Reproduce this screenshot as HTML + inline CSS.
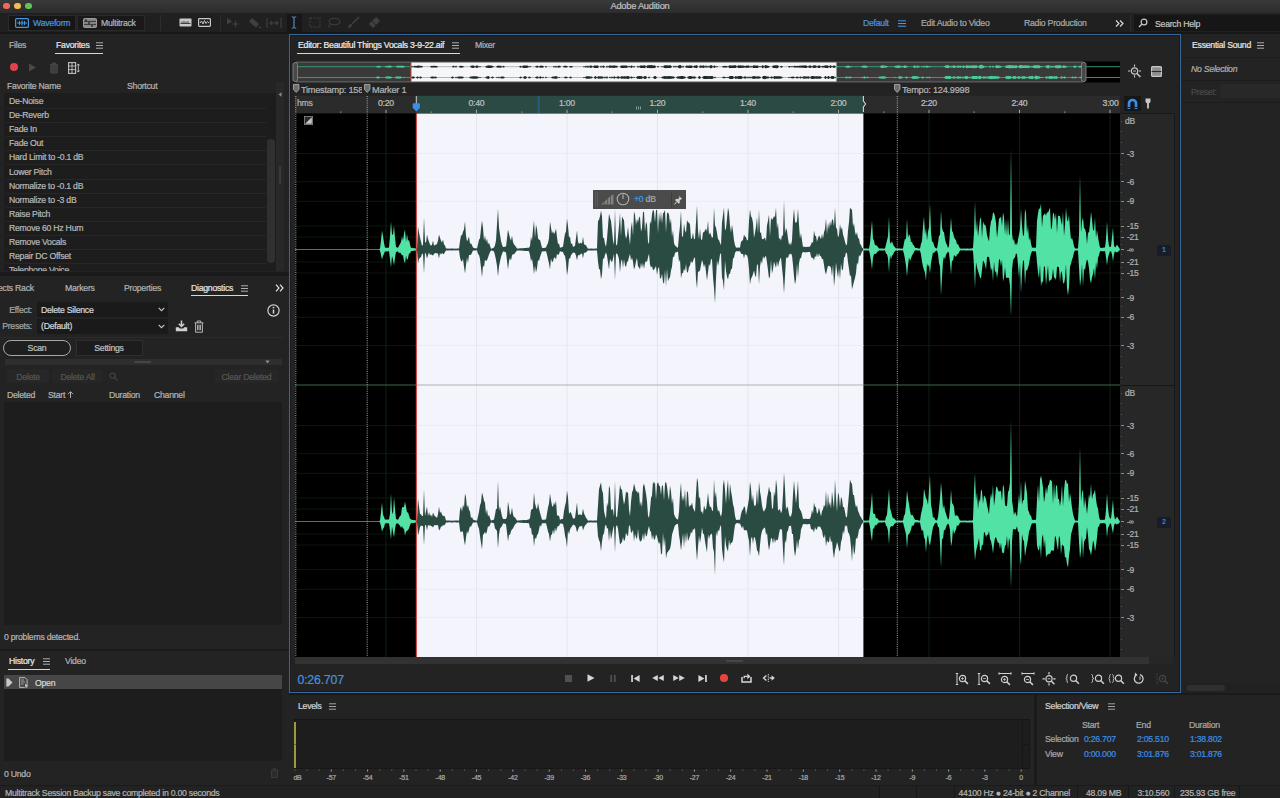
<!DOCTYPE html>
<html><head><meta charset="utf-8"><title>Adobe Audition</title>
<style>
html,body{margin:0;padding:0;background:#1a1a1a;}
body{width:1280px;height:798px;position:relative;overflow:hidden;font-family:"Liberation Sans",sans-serif;}
#app{position:absolute;left:0;top:0;width:1280px;height:798px;overflow:hidden;}
#app div{position:absolute;}
#app svg{position:absolute;overflow:visible;}
.t{letter-spacing:-0.25px;-webkit-text-stroke:0.22px currentColor;}
</style></head><body><div id="app">
<div style="left:0px;top:0px;width:1280px;height:798px;background:#1a1a1a;"></div>
<div style="left:0px;top:0px;width:1280px;height:12.5px;background:linear-gradient(#393939,#2c2c2c);"></div>
<div class="t" style="top:0.3px;line-height:12px;font-size:9.3px;color:#c0c0c0;white-space:nowrap;left:540px;width:200px;text-align:center;">Adobe Audition</div>
<div style="left:3.3px;top:3.0999999999999996px;width:6.4px;height:6.4px;border-radius:50%;background:#ee6a5f"></div>
<div style="left:14.3px;top:3.0999999999999996px;width:6.4px;height:6.4px;border-radius:50%;background:#f5bd4f"></div>
<div style="left:25.3px;top:3.0999999999999996px;width:6.4px;height:6.4px;border-radius:50%;background:#61c454"></div>
<div style="left:0px;top:12.5px;width:1280px;height:19.5px;background:#202020;"></div>
<div style="left:0px;top:32px;width:1280px;height:1.5px;background:#171717;"></div>
<div style="left:0px;top:33.5px;width:289px;height:238.5px;background:#232323;"></div>
<div style="left:0px;top:276px;width:289px;height:372.5px;background:#232323;"></div>
<div style="left:0px;top:651px;width:289px;height:134px;background:#232323;"></div>
<div style="left:288.8px;top:34.4px;width:892.4px;height:658.6px;background:#232323;box-sizing:border-box;border:1.8px solid #3b6797;box-shadow:inset 0 0 0 1px #171b21;"></div>
<div style="left:1181px;top:33.5px;width:99px;height:659px;background:#232323;"></div>
<div style="left:289px;top:694.5px;width:745px;height:90.5px;background:#232323;"></div>
<div style="left:1036.5px;top:694.5px;width:243.5px;height:90.5px;background:#232323;"></div>
<div style="left:0px;top:785.5px;width:1280px;height:12.5px;background:#222222;"></div>
<div style="left:8px;top:15px;width:68px;height:16px;background:#161616;box-sizing:border-box;border:1px solid #2b2b2b;"></div>
<div style="left:77px;top:15px;width:68px;height:16px;background:#191919;box-sizing:border-box;border:1px solid #2b2b2b;"></div>
<svg style="left:15px;top:18px" width="14" height="10" viewBox="0 0 14 10"><rect x="0.6" y="0.6" width="12.8" height="8.8" rx="1" fill="none" stroke="#4a94e0" stroke-width="1.2"/><path d="M2 5h10M4.5 3v4M7 2.6v4.8M9.5 3v4" stroke="#4a94e0" stroke-width="1.1" fill="none"/></svg>
<div class="t" style="top:17.0px;line-height:12px;font-size:8.7px;color:#4a94e0;white-space:nowrap;left:33px;">Waveform</div>
<svg style="left:83px;top:18px" width="14" height="10" viewBox="0 0 14 10"><rect x="0.5" y="0.5" width="13" height="9" rx="1" fill="#8a8a8a" stroke="#9a9a9a" stroke-width="1"/><path d="M1 3.4h12M1 6.4h12" stroke="#2a2a2a" stroke-width="0.9"/><path d="M3 1.2v2M6 4v2M9 7v2" stroke="#2a2a2a" stroke-width="1.4"/></svg>
<div class="t" style="top:17.0px;line-height:12px;font-size:8.7px;color:#b4b4b4;white-space:nowrap;left:101px;">Multitrack</div>
<div style="left:160px;top:15px;width:1px;height:16px;background:#2d2d2d;"></div>
<svg style="left:179px;top:18px" width="13" height="9" viewBox="0 0 13 9"><rect x="0.5" y="0.5" width="12" height="8" rx="0.8" fill="#c8c8c8"/><path d="M1.5 5.5h10M3 3.5v2M5 3v2.5M7 3.5v2M9 3v2.5" stroke="#333" stroke-width="0.9"/></svg>
<svg style="left:198px;top:18px" width="13" height="9" viewBox="0 0 13 9"><rect x="0.6" y="0.6" width="11.8" height="7.8" rx="0.8" fill="none" stroke="#c8c8c8" stroke-width="1.2"/><path d="M2 5l1.5-2 1.5 3 1.5-3.5 1.5 3 1.5-2 1.5 1.5" stroke="#c8c8c8" stroke-width="1" fill="none"/></svg>
<svg style="left:226px;top:17px" width="14" height="12" viewBox="0 0 14 12"><path d="M1 1l5 3.5-5 3z" fill="#404040"/><path d="M9.5 4v6M6.5 7h6" stroke="#404040" stroke-width="1.2"/></svg>
<svg style="left:248px;top:17px" width="14" height="12" viewBox="0 0 14 12"><path d="M4 1l7 6-3 3.5-7-6z" fill="#404040"/><path d="M11 9.5l2 1.5" stroke="#404040" stroke-width="1.2"/></svg>
<svg style="left:266px;top:17px" width="16" height="12" viewBox="0 0 16 12"><path d="M1 1v10M15 1v10M4 6h8M6 4l-2 2 2 2M10 4l2 2-2 2" stroke="#404040" stroke-width="1.1" fill="none"/></svg>
<div style="left:286.5px;top:14px;width:15.5px;height:18px;background:#171717;"></div>
<svg style="left:289.5px;top:16px" width="8" height="13" viewBox="0 0 8 13"><path d="M1.8 0.8c1.2 0 2.2 0.4 2.2 1.2c0-0.8 1-1.2 2.2-1.2M1.8 12.2c1.2 0 2.2-0.4 2.2-1.2c0 0.8 1 1.2 2.2 1.2M4 2v9" stroke="#62a2e8" stroke-width="1" fill="none"/></svg>
<div style="left:220px;top:15px;width:1px;height:16px;background:#2c2c2c;"></div>
<svg style="left:309px;top:17px" width="12" height="11" viewBox="0 0 12 11"><rect x="1" y="1" width="10" height="9" fill="none" stroke="#404040" stroke-width="1.1" stroke-dasharray="2 1.3"/></svg>
<svg style="left:327px;top:17px" width="14" height="11" viewBox="0 0 14 11"><ellipse cx="7.5" cy="4.5" rx="5.5" ry="3.3" fill="none" stroke="#404040" stroke-width="1.1"/><path d="M3 7.5l-1.5 3" stroke="#404040" stroke-width="1.1"/></svg>
<svg style="left:347px;top:16px" width="13" height="13" viewBox="0 0 13 13"><path d="M12 1L5 8" stroke="#404040" stroke-width="1.6"/><path d="M1 12c0-3 2-4 4-4 0 2-1 4-4 4z" fill="#404040"/></svg>
<svg style="left:367px;top:16px" width="14" height="13" viewBox="0 0 14 13"><path d="M9 1l4 4-7 7-4-4z" fill="#404040"/><path d="M5 5l4 4" stroke="#1f1f1f" stroke-width="0.8"/></svg>
<div class="t" style="top:17.0px;line-height:12px;font-size:8.7px;color:#4a94e0;white-space:nowrap;left:863px;">Default</div>
<svg style="left:898px;top:19.5px" width="8" height="7" viewBox="0 0 8 7"><path d="M0 0.8h8M0 3.5h8M0 6.2h8" stroke="#4a94e0" stroke-width="1"/></svg>
<div class="t" style="top:17.0px;line-height:12px;font-size:8.7px;color:#a8a8a8;white-space:nowrap;left:921px;">Edit Audio to Video</div>
<div class="t" style="top:17.0px;line-height:12px;font-size:8.7px;color:#a8a8a8;white-space:nowrap;left:1024px;">Radio Production</div>
<svg style="left:1115px;top:19.5px" width="9" height="7" viewBox="0 0 9 7"><path d="M1 0.5l3 3-3 3M5 0.5l3 3-3 3" stroke="#d8d8d8" stroke-width="1.2" fill="none"/></svg>
<div style="left:1130px;top:14px;width:1px;height:18px;background:#2d2d2d;"></div>
<div style="left:1134px;top:15px;width:146px;height:16px;background:#161616;"></div>
<svg style="left:1138px;top:18px" width="10" height="10" viewBox="0 0 10 10"><circle cx="6" cy="4" r="2.9" fill="none" stroke="#c8c8c8" stroke-width="1.2"/><path d="M3.8 6.2L1 9" stroke="#c8c8c8" stroke-width="1.4"/></svg>
<div class="t" style="top:18.0px;line-height:12px;font-size:8.7px;color:#c4c4c4;white-space:nowrap;left:1155px;">Search Help</div>
<div class="t" style="top:39.0px;line-height:12px;font-size:8.7px;color:#b2b2b2;white-space:nowrap;left:9px;">Files</div>
<div class="t" style="top:39.0px;line-height:12px;font-size:8.7px;color:#e4e4e4;white-space:nowrap;left:56px;">Favorites</div>
<svg style="left:96px;top:41.8px" width="7" height="7" viewBox="0 0 7 7"><path d="M0 0.8h7M0 3.5h7M0 6.2h7" stroke="#c0c0c0" stroke-width="0.9"/></svg>
<div style="left:55px;top:52.7px;width:48px;height:1.4px;background:#d8d8d8;"></div>
<div style="left:9.5px;top:63px;width:8px;height:8px;border-radius:50%;background:#e0434a"></div>
<svg style="left:28px;top:63px" width="9" height="9" viewBox="0 0 9 9"><path d="M1 0.5l7 4-7 4z" fill="#4a4a4a"/></svg>
<svg style="left:49px;top:61.5px" width="10" height="12" viewBox="0 0 10 12"><path d="M1 2.5h8M3.5 2.5v-1.5h3v1.5M1.8 2.5v8.5h6.4v-8.5" fill="#3e3e3e" stroke="#464646" stroke-width="1"/></svg>
<svg style="left:68px;top:61.5px" width="12" height="12" viewBox="0 0 12 12"><rect x="0.6" y="0.6" width="7" height="10.8" fill="none" stroke="#c4c4c4" stroke-width="1.1"/><path d="M0.6 4h7M0.6 7.6h7M4 0.6v10.8" stroke="#c4c4c4" stroke-width="0.9"/><path d="M10.3 2v8M9 3.5l1.3-1.6 1.3 1.6M9 8.5l1.3 1.6 1.3-1.6" stroke="#c4c4c4" stroke-width="0.9" fill="none"/></svg>
<div class="t" style="top:80.0px;line-height:12px;font-size:8.7px;color:#b4b4b4;white-space:nowrap;left:7px;">Favorite Name</div>
<div class="t" style="top:80.0px;line-height:12px;font-size:8.7px;color:#b4b4b4;white-space:nowrap;left:127px;">Shortcut</div>
<div style="left:4px;top:93px;width:272px;height:178px;background:#1d1d1d;"></div>
<div style="left:0;top:93px;width:286px;height:178px;overflow:hidden;">
<div style="left:6px;top:15.0px;width:260px;height:1px;background:#272727"></div>
<div class="t" style="left:9px;top:2.0px;line-height:12px;font-size:8.7px;color:#b8b8b8;white-space:nowrap">De-Noise</div>
<div style="left:6px;top:29.1px;width:260px;height:1px;background:#272727"></div>
<div class="t" style="left:9px;top:16.1px;line-height:12px;font-size:8.7px;color:#b8b8b8;white-space:nowrap">De-Reverb</div>
<div style="left:6px;top:43.2px;width:260px;height:1px;background:#272727"></div>
<div class="t" style="left:9px;top:30.2px;line-height:12px;font-size:8.7px;color:#b8b8b8;white-space:nowrap">Fade In</div>
<div style="left:6px;top:57.3px;width:260px;height:1px;background:#272727"></div>
<div class="t" style="left:9px;top:44.3px;line-height:12px;font-size:8.7px;color:#b8b8b8;white-space:nowrap">Fade Out</div>
<div style="left:6px;top:71.4px;width:260px;height:1px;background:#272727"></div>
<div class="t" style="left:9px;top:58.4px;line-height:12px;font-size:8.7px;color:#b8b8b8;white-space:nowrap">Hard Limit to -0.1 dB</div>
<div style="left:6px;top:85.5px;width:260px;height:1px;background:#272727"></div>
<div class="t" style="left:9px;top:72.5px;line-height:12px;font-size:8.7px;color:#b8b8b8;white-space:nowrap">Lower Pitch</div>
<div style="left:6px;top:99.6px;width:260px;height:1px;background:#272727"></div>
<div class="t" style="left:9px;top:86.6px;line-height:12px;font-size:8.7px;color:#b8b8b8;white-space:nowrap">Normalize to -0.1 dB</div>
<div style="left:6px;top:113.7px;width:260px;height:1px;background:#272727"></div>
<div class="t" style="left:9px;top:100.7px;line-height:12px;font-size:8.7px;color:#b8b8b8;white-space:nowrap">Normalize to -3 dB</div>
<div style="left:6px;top:127.8px;width:260px;height:1px;background:#272727"></div>
<div class="t" style="left:9px;top:114.8px;line-height:12px;font-size:8.7px;color:#b8b8b8;white-space:nowrap">Raise Pitch</div>
<div style="left:6px;top:141.9px;width:260px;height:1px;background:#272727"></div>
<div class="t" style="left:9px;top:128.9px;line-height:12px;font-size:8.7px;color:#b8b8b8;white-space:nowrap">Remove 60 Hz Hum</div>
<div style="left:6px;top:156.0px;width:260px;height:1px;background:#272727"></div>
<div class="t" style="left:9px;top:143.0px;line-height:12px;font-size:8.7px;color:#b8b8b8;white-space:nowrap">Remove Vocals</div>
<div style="left:6px;top:170.1px;width:260px;height:1px;background:#272727"></div>
<div class="t" style="left:9px;top:157.1px;line-height:12px;font-size:8.7px;color:#b8b8b8;white-space:nowrap">Repair DC Offset</div>
<div style="left:6px;top:184.2px;width:260px;height:1px;background:#272727"></div>
<div class="t" style="left:9px;top:171.2px;line-height:12px;font-size:8.7px;color:#b8b8b8;white-space:nowrap">Telephone Voice</div>
</div>
<div style="left:267px;top:139px;width:7.5px;height:124px;background:#303030;border-radius:3.7px;"></div>
<div style="left:276px;top:82px;width:8px;height:189px;background:#282828;"></div>
<svg style="left:277.5px;top:91.5px" width="4" height="5" viewBox="0 0 4 5"><path d="M3.5 0.3v4.4L0.5 2.5z" fill="#8c8c8c"/></svg>
<div style="left:278.5px;top:166px;width:2.5px;height:18px;background:#3a3a3a;"></div>
<div class="t" style="top:282.0px;line-height:12px;font-size:8.7px;color:#b2b2b2;white-space:nowrap;left:-2px;">ects Rack</div>
<div class="t" style="top:282.0px;line-height:12px;font-size:8.7px;color:#b2b2b2;white-space:nowrap;left:65px;">Markers</div>
<div class="t" style="top:282.0px;line-height:12px;font-size:8.7px;color:#b2b2b2;white-space:nowrap;left:124px;">Properties</div>
<div class="t" style="top:282.0px;line-height:12px;font-size:8.7px;color:#e4e4e4;white-space:nowrap;left:191px;">Diagnostics</div>
<svg style="left:240.5px;top:284.5px" width="7" height="7" viewBox="0 0 7 7"><path d="M0 0.8h7M0 3.5h7M0 6.2h7" stroke="#c0c0c0" stroke-width="0.9"/></svg>
<div style="left:191px;top:295px;width:57px;height:1.3px;background:#d8d8d8;"></div>
<svg style="left:275px;top:284px" width="9" height="8" viewBox="0 0 9 8"><path d="M1 0.7l3 3.3-3 3.3M5 0.7l3 3.3-3 3.3" stroke="#e0e0e0" stroke-width="1.2" fill="none"/></svg>
<div class="t" style="top:303.5px;line-height:12px;font-size:8.7px;color:#a6a6a6;white-space:nowrap;right:1248px;">Effect:</div>
<div style="left:37px;top:302px;width:131px;height:15px;background:#1a1a1a;"></div>
<div class="t" style="top:303.5px;line-height:12px;font-size:8.7px;color:#d8d8d8;white-space:nowrap;left:41px;">Delete Silence</div>
<svg style="left:158px;top:307px" width="7" height="5" viewBox="0 0 7 5"><path d="M0.7 0.8l2.8 2.8 2.8-2.8" stroke="#c8c8c8" stroke-width="1.1" fill="none"/></svg>
<div class="t" style="top:320.0px;line-height:12px;font-size:8.7px;color:#a6a6a6;white-space:nowrap;right:1248px;">Presets:</div>
<div style="left:37px;top:319px;width:131px;height:15px;background:#1a1a1a;"></div>
<div class="t" style="top:320.0px;line-height:12px;font-size:8.7px;color:#d8d8d8;white-space:nowrap;left:41px;">(Default)</div>
<svg style="left:158px;top:323.5px" width="7" height="5" viewBox="0 0 7 5"><path d="M0.7 0.8l2.8 2.8 2.8-2.8" stroke="#c8c8c8" stroke-width="1.1" fill="none"/></svg>
<svg style="left:266.5px;top:303.5px" width="13" height="13" viewBox="0 0 13 13"><circle cx="6.5" cy="6.5" r="5.6" fill="none" stroke="#d0d0d0" stroke-width="1.2"/><path d="M6.5 5.6v4" stroke="#d0d0d0" stroke-width="1.5"/><circle cx="6.5" cy="3.6" r="0.9" fill="#d0d0d0"/></svg>
<svg style="left:175px;top:320px" width="13" height="12" viewBox="0 0 13 12"><path d="M6.5 0.5v5.5M3.8 3.8l2.7 2.7 2.7-2.7" stroke="#d0d0d0" stroke-width="1.5" fill="none"/><path d="M0.8 7.2h3l1 1.3h3.4l1-1.3h3v4h-11.4z" fill="#d0d0d0"/></svg>
<svg style="left:194px;top:319.5px" width="10" height="13" viewBox="0 0 10 13"><path d="M0.6 2.8h8.8M3.3 2.8v-1.8h3.4v1.8M1.6 2.8v9.4h6.8v-9.4M3.6 4.8v5.4M5 4.8v5.4M6.4 4.8v5.4" fill="none" stroke="#b8b8b8" stroke-width="1"/></svg>
<div style="left:3px;top:340px;width:68px;height:15.5px;background:#1f1f1f;box-sizing:border-box;border:1px solid #a8a8a8;border-radius:8px;"></div>
<div class="t" style="top:341.5px;line-height:12px;font-size:8.7px;color:#c0c0c0;white-space:nowrap;left:-63px;width:200px;text-align:center;">Scan</div>
<div style="left:76px;top:340px;width:67px;height:15.5px;background:#1c1c1c;box-sizing:border-box;border:1px solid #2e2e2e;"></div>
<div class="t" style="top:341.5px;line-height:12px;font-size:8.7px;color:#c0c0c0;white-space:nowrap;left:9px;width:200px;text-align:center;">Settings</div>
<div style="left:0px;top:336.5px;width:284px;height:1px;background:#2a2a2a;"></div>
<div style="left:5px;top:358.5px;width:277px;height:6.5px;background:#2e2e2e;"></div>
<div style="left:134px;top:361px;width:17px;height:1.5px;background:#454545;"></div>
<svg style="left:265px;top:360px" width="5" height="4" viewBox="0 0 5 4"><path d="M0.3 0.5h4.4L2.5 3.5z" fill="#8c8c8c"/></svg>
<div style="left:7px;top:369px;width:42px;height:14px;background:#262626;border-radius:2px;"></div>
<div class="t" style="top:370.5px;line-height:12px;font-size:8.7px;color:#565656;white-space:nowrap;left:-72px;width:200px;text-align:center;">Delete</div>
<div style="left:52px;top:369px;width:51px;height:14px;background:#262626;border-radius:2px;"></div>
<div class="t" style="top:370.5px;line-height:12px;font-size:8.7px;color:#565656;white-space:nowrap;left:-22.5px;width:200px;text-align:center;">Delete All</div>
<svg style="left:109px;top:372px" width="9" height="9" viewBox="0 0 9 9"><circle cx="3.6" cy="3.6" r="2.6" fill="none" stroke="#444" stroke-width="1.1"/><path d="M5.5 5.5l3 3" stroke="#444" stroke-width="1.2"/></svg>
<div style="left:215px;top:369px;width:64px;height:14px;background:#262626;border-radius:2px;"></div>
<div class="t" style="top:370.5px;line-height:12px;font-size:8.7px;color:#565656;white-space:nowrap;left:146.5px;width:200px;text-align:center;">Clear Deleted</div>
<div class="t" style="top:388.5px;line-height:12px;font-size:8.7px;color:#b4b4b4;white-space:nowrap;left:7px;">Deleted</div>
<div class="t" style="top:388.5px;line-height:12px;font-size:8.7px;color:#b4b4b4;white-space:nowrap;left:48px;">Start</div>
<svg style="left:67px;top:390.5px" width="7" height="7" viewBox="0 0 7 7"><path d="M3.5 0.8v6M1 3.2l2.5-2.5 2.5 2.5" stroke="#b4b4b4" stroke-width="1" fill="none"/></svg>
<div class="t" style="top:388.5px;line-height:12px;font-size:8.7px;color:#b4b4b4;white-space:nowrap;left:109px;">Duration</div>
<div class="t" style="top:388.5px;line-height:12px;font-size:8.7px;color:#b4b4b4;white-space:nowrap;left:154px;">Channel</div>
<div style="left:4px;top:402px;width:278px;height:223px;background:#1d1d1d;"></div>
<div class="t" style="top:631.0px;line-height:12px;font-size:8.7px;color:#b4b4b4;white-space:nowrap;left:4px;">0 problems detected.</div>
<div class="t" style="top:655.0px;line-height:12px;font-size:8.7px;color:#e8e8e8;white-space:nowrap;left:9px;">History</div>
<svg style="left:43px;top:657.7px" width="7" height="7" viewBox="0 0 7 7"><path d="M0 0.8h7M0 3.5h7M0 6.2h7" stroke="#c0c0c0" stroke-width="0.9"/></svg>
<div style="left:8px;top:669px;width:42px;height:1.3px;background:#d8d8d8;"></div>
<div class="t" style="top:655.0px;line-height:12px;font-size:8.7px;color:#b2b2b2;white-space:nowrap;left:65px;">Video</div>
<div style="left:4px;top:675px;width:278px;height:86px;background:#1d1d1d;"></div>
<div style="left:4px;top:675px;width:278px;height:13.7px;background:#464646;"></div>
<svg style="left:5.5px;top:678px" width="7" height="9" viewBox="0 0 7 9"><path d="M0.3 0.5h2.2l4 4-4 4H0.3z" fill="#c8c8c8"/></svg>
<svg style="left:19px;top:676.5px" width="10" height="11" viewBox="0 0 10 11"><path d="M0.6 0.6h5.5l2 2v7.8h-7.5z" fill="none" stroke="#b8b8b8" stroke-width="1"/><path d="M2 3h3M2 5h4M2 7h2.5" stroke="#b8b8b8" stroke-width="0.8"/><path d="M6 6.2l3.6 2.4L6 11z" fill="#d0d0d0" stroke="#3c3c3c" stroke-width="0.5"/></svg>
<div class="t" style="top:676.5px;line-height:12px;font-size:8.7px;color:#d8d8d8;white-space:nowrap;left:35px;">Open</div>
<div class="t" style="top:767.5px;line-height:12px;font-size:8.7px;color:#b4b4b4;white-space:nowrap;left:4px;">0 Undo</div>
<svg style="left:270px;top:768px" width="9" height="10" viewBox="0 0 9 10"><path d="M0.6 2.3h7.8M3 2.3v-1.5h3v1.5M1.5 2.3v7.2h6v-7.2" fill="#2c2c2c" stroke="#3a3a3a" stroke-width="1"/></svg>
<div class="t" style="top:786.5px;line-height:12px;font-size:8.7px;color:#b4b4b4;white-space:nowrap;left:5px;">Multitrack Session Backup save completed in 0.00 seconds</div>
<div class="t" style="top:39.0px;line-height:12px;font-size:8.7px;color:#ececec;white-space:nowrap;left:298px;">Editor: Beautiful Things Vocals 3-9-22.aif</div>
<svg style="left:452px;top:41.8px" width="7" height="7" viewBox="0 0 7 7"><path d="M0 0.8h7M0 3.5h7M0 6.2h7" stroke="#c0c0c0" stroke-width="0.9"/></svg>
<div style="left:297px;top:52.7px;width:163px;height:1.4px;background:#d8d8d8;"></div>
<div class="t" style="top:39.0px;line-height:12px;font-size:8.7px;color:#b2b2b2;white-space:nowrap;left:475px;">Mixer</div>
<svg style="left:0;top:0" width="1280" height="798" viewBox="0 0 1280 798">
<defs><clipPath id="cs"><rect x="416.3" y="113" width="447.1" height="544"/></clipPath><clipPath id="cw"><rect x="295" y="113" width="825" height="544"/></clipPath></defs>
<rect x="295" y="113" width="825" height="544" fill="#000"/>
<path d="M295 153.5H1120" stroke="#0a180d" stroke-width="1"/>
<path d="M295 345.5H1120" stroke="#0a180d" stroke-width="1"/>
<path d="M295 181.7H1120" stroke="#0a180d" stroke-width="1"/>
<path d="M295 317.3H1120" stroke="#0a180d" stroke-width="1"/>
<path d="M295 201.3H1120" stroke="#0a180d" stroke-width="1"/>
<path d="M295 297.7H1120" stroke="#0a180d" stroke-width="1"/>
<path d="M295 226.0H1120" stroke="#0a180d" stroke-width="1"/>
<path d="M295 273.0H1120" stroke="#0a180d" stroke-width="1"/>
<path d="M295 237.0H1120" stroke="#0a180d" stroke-width="1"/>
<path d="M295 262.0H1120" stroke="#0a180d" stroke-width="1"/>
<path d="M295 425.5H1120" stroke="#0a180d" stroke-width="1"/>
<path d="M295 617.5H1120" stroke="#0a180d" stroke-width="1"/>
<path d="M295 453.7H1120" stroke="#0a180d" stroke-width="1"/>
<path d="M295 589.3H1120" stroke="#0a180d" stroke-width="1"/>
<path d="M295 473.3H1120" stroke="#0a180d" stroke-width="1"/>
<path d="M295 569.7H1120" stroke="#0a180d" stroke-width="1"/>
<path d="M295 498.0H1120" stroke="#0a180d" stroke-width="1"/>
<path d="M295 545.0H1120" stroke="#0a180d" stroke-width="1"/>
<path d="M295 509.0H1120" stroke="#0a180d" stroke-width="1"/>
<path d="M295 534.0H1120" stroke="#0a180d" stroke-width="1"/>
<path d="M386.0 113V657" stroke="#0d200e" stroke-width="1"/>
<path d="M476.5 113V657" stroke="#0d200e" stroke-width="1"/>
<path d="M567.0 113V657" stroke="#0d200e" stroke-width="1"/>
<path d="M657.5 113V657" stroke="#0d200e" stroke-width="1"/>
<path d="M748.0 113V657" stroke="#0d200e" stroke-width="1"/>
<path d="M838.5 113V657" stroke="#0d200e" stroke-width="1"/>
<path d="M929.0 113V657" stroke="#0d200e" stroke-width="1"/>
<path d="M1019.5 113V657" stroke="#0d200e" stroke-width="1"/>
<path d="M1110.0 113V657" stroke="#0d200e" stroke-width="1"/>
<rect x="416.3" y="113" width="447.1" height="544" fill="#f4f4fc"/>
<g clip-path="url(#cs)">
<path d="M295 153.5H1120" stroke="#ebebf4" stroke-width="1"/>
<path d="M295 345.5H1120" stroke="#ebebf4" stroke-width="1"/>
<path d="M295 181.7H1120" stroke="#ebebf4" stroke-width="1"/>
<path d="M295 317.3H1120" stroke="#ebebf4" stroke-width="1"/>
<path d="M295 201.3H1120" stroke="#ebebf4" stroke-width="1"/>
<path d="M295 297.7H1120" stroke="#ebebf4" stroke-width="1"/>
<path d="M295 425.5H1120" stroke="#ebebf4" stroke-width="1"/>
<path d="M295 617.5H1120" stroke="#ebebf4" stroke-width="1"/>
<path d="M295 453.7H1120" stroke="#ebebf4" stroke-width="1"/>
<path d="M295 589.3H1120" stroke="#ebebf4" stroke-width="1"/>
<path d="M295 473.3H1120" stroke="#ebebf4" stroke-width="1"/>
<path d="M295 569.7H1120" stroke="#ebebf4" stroke-width="1"/>
<path d="M386.0 113V657" stroke="#e6e6f1" stroke-width="1"/>
<path d="M476.5 113V657" stroke="#e6e6f1" stroke-width="1"/>
<path d="M567.0 113V657" stroke="#e6e6f1" stroke-width="1"/>
<path d="M657.5 113V657" stroke="#e6e6f1" stroke-width="1"/>
<path d="M748.0 113V657" stroke="#e6e6f1" stroke-width="1"/>
<path d="M838.5 113V657" stroke="#e6e6f1" stroke-width="1"/>
<path d="M929.0 113V657" stroke="#e6e6f1" stroke-width="1"/>
<path d="M1019.5 113V657" stroke="#e6e6f1" stroke-width="1"/>
<path d="M1110.0 113V657" stroke="#e6e6f1" stroke-width="1"/>
</g>
<path d="M295 249.5H1120" stroke="#4a7c64" stroke-width="1.2"/>
<path d="M295 521.5H1120" stroke="#4a7c64" stroke-width="1.2"/>
<path d="M295,249.5 379,249.5 380,248.5 381,240.2 382,230.5 383,236.1 384,242.8 385,247.7 386,247.7 387,247.7 388,247.7 389,247.5 390,236.3 391,221.5 392,234 393,234.9 394,225.5 395,237.7 396,246.7 397,247.4 398,247.7 399,245.8 400,244 401,242 402,236.6 403,240.7 404,233.7 405,229.5 406,242.3 407,234.1 408,240.9 409,239.7 410,244.6 411,247.9 412,247.7 413,248 414,248.3 415,248.3 416,248.4L416,250.7 415,250.6 414,250.7 413,251.1 412,251 411,251.2 410,253.4 409,253.4 408,258.6 407,259.9 406,255.7 405,263.5 404,260.7 403,254.9 402,255.6 401,253.6 400,252.6 399,253.2 398,251.3 397,251.8 396,252 395,257.7 394,265.5 393,259.5 392,256 391,267.5 390,258.9 389,251.3 388,251.2 387,251.5 386,251.4 385,251.3 384,253.7 383,256 382,259.5 381,255 380,250.5 379,249.5 295,249.5Z" fill="#52e2a6"/><path d="M295,521.5 379,521.5 380,520.5 381,511.9 382,502.5 383,514.6 384,517 385,519.7 386,519.6 387,519.5 388,519.6 389,519.5 390,513.5 391,493.5 392,511.5 393,514.6 394,497.5 395,508.9 396,519 397,519.3 398,519.9 399,517.7 400,516.1 401,515.2 402,507.6 403,507 404,507.2 405,501.5 406,506.8 407,512.4 408,512.3 409,515.4 410,518.5 411,519.6 412,519.8 413,519.9 414,520.1 415,520.3 416,520.4L416,522.5 415,522.8 414,523 413,522.9 412,523.3 411,523.1 410,525.3 409,528.5 408,530 407,530.9 406,531.4 405,535.5 404,528.8 403,528.4 402,526.1 401,527.9 400,525.6 399,524.8 398,523.3 397,523.6 396,524 395,528.8 394,537.5 393,531.8 392,526.5 391,539.5 390,530.6 389,523.4 388,523.3 387,523.3 386,523.2 385,523.4 384,527.4 383,528.7 382,531.5 381,526.3 380,522.4 379,521.5 295,521.5Z" fill="#52e2a6"/>
<g clip-path="url(#cs)"><path d="M295 249.5H1120M295 521.5H1120" stroke="#3c5a52" stroke-width="1"/></g>
<path d="M416,248.4 417,248.7 418,226.5 419,232.4 420,237.3 421,241.7 422,245.7 423,244.7 424,217.5 425,241.5 426,243.1 427,234.5 428,239.1 429,241.8 430,244.5 431,245.7 432,244.8 433,240.5 434,245.4 435,245.2 436,244.4 437,244 438,240.4 439,234.5 440,237.7 441,240.7 442,242.4 443,239.5 444,244.6 445,245.6 446,248.6 447,248.5 448,248.6 449,248.7 450,248.6 451,248.6 452,248.6 453,248.6 454,248.7 455,248.6 456,248.7 457,248.5 458,248.6 459,248.6 460,241.2 461,235.2 462,235.4 463,231.7 464,229.5 465,221.5 466,235.6 467,241.5 468,239.3 469,236.5 470,243.8 471,243.2 472,245.2 473,247.5 474,248.1 475,248.3 476,248.3 477,248.6 478,244.2 479,239.8 480,238.2 481,228.4 482,220.5 483,227.8 484,240.5 485,235.4 486,242.1 487,238.4 488,244.5 489,242.6 490,245.7 491,248.7 492,248.4 493,248 494,247.5 495,245.3 496,240.6 497,224.4 498,208.5 499,228.1 500,234.5 501,241.1 502,244.7 503,247 504,247.1 505,246.5 506,246.8 507,238.2 508,229.5 509,233.8 510,238 511,240.8 512,235.5 513,241.9 514,244.5 515,245.6 516,247.1 517,248.5 518,248.5 519,248.5 520,248.3 521,248.3 522,248.3 523,248.2 524,247.9 525,248.1 526,248 527,247.8 528,247.8 529,247.8 530,246 531,236.5 532,241.1 533,229.3 534,220.5 535,238.1 536,224.7 537,229 538,238.2 539,239.7 540,239.9 541,244 542,247.8 543,247.9 544,247.9 545,247.7 546,247.6 547,244.9 548,242.9 549,238.1 550,221.5 551,227.5 552,233.6 553,231.1 554,234 555,232.2 556,228.5 557,237.2 558,244.1 559,243.5 560,247.7 561,247.5 562,247.1 563,246.7 564,239.7 565,233.8 566,231.6 567,218.5 568,225.9 569,237.8 570,236.3 571,244.2 572,243.1 573,247.1 574,246.2 575,246 576,238 577,230.5 578,241.8 579,243.9 580,243 581,242.7 582,243.8 583,236.5 584,243.9 585,245.1 586,245.2 587,247.3 588,248.7 589,248.6 590,248.7 591,248.6 592,248.5 593,248.7 594,248.7 595,248.6 596,248.5 597,248.6 598,221 599,219.7 600,216.2 601,210.5 602,216.5 603,237.9 604,237.7 605,244.1 606,246.8 607,238.9 608,226.3 609,213.5 610,217.8 611,221.1 612,230 613,240.3 614,245 615,208.5 616,244.6 617,245.6 618,236.3 619,226.1 620,212.5 621,236.4 622,216.4 623,218.6 624,220.2 625,233.4 626,238.8 627,235.4 628,226.7 629,236.4 630,244.9 631,228 632,221.7 633,235.7 634,211.5 635,214.7 636,225.3 637,218.7 638,222.8 639,217.6 640,216.8 641,231.7 642,227.8 643,212.3 644,211.5 645,231.5 646,221.8 647,224.4 648,242.1 649,244.1 650,221.1 651,224 652,213.9 653,209.5 654,211.2 655,222.6 656,210.2 657,209.7 658,233.7 659,212.2 660,222.5 661,211.5 662,223.8 663,213.6 664,212.2 665,209.9 666,232.4 667,213.2 668,212.4 669,214.4 670,223.9 671,218.4 672,237 673,230 674,243.3 675,245.5 676,246.2 677,247.4 678,247.4 679,234.7 680,226 681,210.5 682,236.6 683,236.5 684,223.4 685,230.5 686,232.8 687,220 688,222.5 689,222.5 690,224.7 691,239.2 692,237.9 693,232.6 694,239.2 695,238.7 696,222.2 697,205.5 698,230.5 699,239.6 700,228.2 701,239.2 702,240.2 703,232.3 704,232.3 705,230.3 706,228.6 707,231.5 708,220.5 709,235 710,232.2 711,235.1 712,237.9 713,236.8 714,207.5 715,225.6 716,227.5 717,233 718,239.3 719,239.9 720,243 721,245.2 722,222.5 723,214.9 724,207.5 725,230.4 726,228.5 727,218.4 728,207.5 729,212.4 730,225.4 731,232.5 732,224.4 733,231.4 734,240.5 735,245.3 736,247.5 737,247.8 738,247.5 739,247.6 740,247.7 741,241.7 742,240.9 743,239.7 744,234.5 745,236.8 746,236.9 747,240.6 748,240 749,220.9 750,209.5 751,216.2 752,218.1 753,222.9 754,238.1 755,232.7 756,226.7 757,216.9 758,233.3 759,209.5 760,232.9 761,232.2 762,239.1 763,239.3 764,238.4 765,237.5 766,241.2 767,225.4 768,220.8 769,214.5 770,236.8 771,217.6 772,220.1 773,218.5 774,216.3 775,217.1 776,207.5 777,229.1 778,222.5 779,239.3 780,237.8 781,240.7 782,234.9 783,236.2 784,200.5 785,233.4 786,228 787,230.8 788,238.5 789,245.1 790,242.6 791,245.4 792,240.3 793,220.1 794,208.5 795,221.8 796,223.1 797,221.2 798,208.5 799,224.9 800,238.5 801,232.9 802,240.4 803,247 804,246.6 805,246.9 806,246.9 807,246.8 808,247 809,246.8 810,246.5 811,244.5 812,241.8 813,242.9 814,230.5 815,235.7 816,235.9 817,241.7 818,238.1 819,235.5 820,237 821,239.3 822,233.7 823,238.7 824,232.3 825,229.1 826,218.5 827,234.2 828,222.7 829,229.2 830,221 831,225.9 832,219.5 833,219.5 834,226.5 835,207.5 836,227.5 837,229.1 838,237.6 839,235 840,223.9 841,230 842,227 843,234.6 844,237.7 845,241.7 846,245.3 847,244.6 848,230.4 849,222.1 850,207.5 851,209.2 852,209.6 853,226.8 854,223 855,231.7 856,235.4 857,232.1 858,237.9 859,238.5 860,243.9 861,244.8 862,247.7 863,248.1L863,250.8 862,251.2 861,254.2 860,256.4 859,254.9 858,265 857,262.3 856,273.1 855,278.1 854,281.6 853,285.5 852,289.5 851,274.9 850,276.6 849,268.9 848,262.3 847,253.3 846,252.6 845,256.8 844,257.5 843,269.2 842,270.5 841,263.1 840,279.5 839,267.9 838,277.8 837,270.9 836,262.6 835,276.7 834,286.5 833,264.5 832,276.3 831,268 830,266 829,266.3 828,265.7 827,269.7 826,274.5 825,271.5 824,265.1 823,258.8 822,259.2 821,256.3 820,256 819,253.2 818,257.5 817,253 816,257.6 815,255.8 814,260.5 813,257.7 812,258.3 811,256.5 810,252 809,252.1 808,252.1 807,252.3 806,252.3 805,252.4 804,252.1 803,252.1 802,253.3 801,258.3 800,258.3 799,263.6 798,277.5 797,263.3 796,279.4 795,284.5 794,276.3 793,264.9 792,255.4 791,253.5 790,254.2 789,254.5 788,258.2 787,257.1 786,258.6 785,276.6 784,293.5 783,277.6 782,267.7 781,257.5 780,259.2 779,262.3 778,267 777,260.7 776,268 775,264.8 774,261.5 773,269.3 772,273.4 771,259.9 770,276.6 769,278.5 768,270 767,262.4 766,255.9 765,256.7 764,258.9 763,256.1 762,264 761,260.2 760,266.8 759,284.5 758,264.8 757,264.6 756,277.2 755,275.2 754,270.4 753,273.9 752,276.9 751,278.6 750,284.5 749,269 748,258.7 747,255.3 746,255.1 745,253.9 744,258.5 743,253.8 742,254.3 741,253.5 740,251.2 739,251.2 738,251.2 737,251.3 736,251.3 735,253 734,257.8 733,258.5 732,268.7 731,269.3 730,273.7 729,274 728,279.5 727,276.7 726,270.9 725,260.4 724,290.5 723,281.1 722,277.6 721,253.1 720,254.5 719,261.3 718,266.1 717,260 716,278.4 715,303.5 714,287.7 713,277.1 712,259.6 711,258.9 710,266.3 709,263.7 708,272.2 707,280.5 706,272 705,263.7 704,267.4 703,262.9 702,260.1 701,265 700,270.4 699,271.4 698,271.7 697,288.5 696,279.2 695,257.5 694,258 693,261.3 692,263.2 691,260.8 690,265.6 689,266.9 688,271.9 687,272.8 686,264.1 685,271.3 684,268.6 683,273.3 682,273 681,278.5 680,259.3 679,262.3 678,251.6 677,251.9 676,252.3 675,252.9 674,257.2 673,256.6 672,266.7 671,270.6 670,277.2 669,278.6 668,281.3 667,268.8 666,286.5 665,270 664,284.1 663,282.1 662,273.7 661,278.2 660,278.6 659,266.7 658,269.1 657,274.9 656,266.1 655,268.1 654,269.4 653,270.3 652,266.3 651,267.4 650,264.6 649,253.7 648,257.3 647,262.3 646,260.8 645,263.1 644,269.1 643,262.7 642,268 641,262.8 640,269.5 639,267.3 638,266.2 637,257.9 636,261.4 635,266.7 634,269.5 633,261.8 632,257.5 631,260.6 630,253.9 629,256.9 628,261.3 627,262.1 626,266.9 625,265.6 624,259.2 623,268 622,259 621,262.1 620,272.5 619,259.2 618,255.6 617,253.5 616,253.7 615,280.5 614,253.7 613,258.4 612,262.2 611,261 610,258.8 609,269.5 608,262.5 607,255.7 606,252.5 605,254.7 604,259 603,258.2 602,274.3 601,279.5 600,269.4 599,269.1 598,261.8 597,250.4 596,250.5 595,250.3 594,250.4 593,250.5 592,250.5 591,250.4 590,250.5 589,250.5 588,250.3 587,251.5 586,252.2 585,253.1 584,252.6 583,258.5 582,253.3 581,254 580,254.6 579,255.5 578,255.1 577,260.5 576,255.7 575,253 574,252.8 573,252.5 572,254.1 571,255.2 570,258.7 569,258.3 568,269.1 567,275.5 566,261.9 565,255.7 564,254.7 563,252.1 562,251.8 561,251.7 560,251.1 559,254.2 558,254.9 557,253.8 556,259.5 555,257.6 554,257.6 553,261.5 552,261.9 551,258.6 550,269.5 549,263.5 548,259.3 547,254.4 546,251.2 545,251.3 544,251.2 543,251.4 542,251.3 541,254.3 540,257.1 539,261 538,260.1 537,268.2 536,272.5 535,265.5 534,274.5 533,265.1 532,258.6 531,261.4 530,255 529,251.3 528,251.1 527,251.1 526,251 525,250.9 524,250.8 523,250.7 522,250.7 521,250.6 520,250.6 519,250.5 518,250.5 517,250.5 516,251.8 515,253 514,254.5 513,253.9 512,255.4 511,260.5 510,257.9 509,261.1 508,269.5 507,260.8 506,252.4 505,252 504,251.6 503,251.4 502,254 501,257 500,261.2 499,266.6 498,276.5 497,265.8 496,260.1 495,255.2 494,251.5 493,250.9 492,250.6 491,250.4 490,252.2 489,254.6 488,257.4 487,260.2 486,260.9 485,259.7 484,267 483,265.6 482,277.5 481,267.5 480,258.9 479,255 478,254 477,250.3 476,250.4 475,250.4 474,250.4 473,250.5 472,252.7 471,254.8 470,255 469,255 468,263 467,257.4 466,265.3 465,273.5 464,266.8 463,258.7 462,261.8 461,260.7 460,257.5 459,250.3 458,250.4 457,250.3 456,250.5 455,250.3 454,250.5 453,250.3 452,250.4 451,250.4 450,250.3 449,250.4 448,250.5 447,250.4 446,250.4 445,252 444,253.9 443,254 442,252.8 441,254.8 440,253 439,258.5 438,253.8 437,253.2 436,253.2 435,253.1 434,253.9 433,255.5 432,254.9 431,254.3 430,255 429,252.4 428,255.2 427,258.5 426,254.2 425,252.4 424,273.5 423,253.9 422,253.7 421,257 420,257.7 419,259 418,263.5 417,250.5 416,250.7Z" fill="#2a4b42"/><path d="M416,520.4 417,520.7 418,498.5 419,506.3 420,514.1 421,514.2 422,516.1 423,516 424,489.5 425,516 426,511 427,506.5 428,516.3 429,511.9 430,516.1 431,514.6 432,517.1 433,512.5 434,514.7 435,516.6 436,516.7 437,517.9 438,514.2 439,506.5 440,513.1 441,511.5 442,514.6 443,516.2 444,515.5 445,517.1 446,520.5 447,520.5 448,520.6 449,520.6 450,520.5 451,520.7 452,520.7 453,520.6 454,520.7 455,520.6 456,520.6 457,520.6 458,520.5 459,520.7 460,509.7 461,506.8 462,511.8 463,504.5 464,507.7 465,493.5 466,497.5 467,507.7 468,504.8 469,509.7 470,511.6 471,518.3 472,517 473,519.6 474,519.9 475,520.2 476,520.4 477,520.7 478,516.6 479,511.7 480,505.3 481,502.4 482,492.5 483,496.1 484,500.7 485,502.7 486,514.2 487,509.1 488,516.4 489,514.8 490,518.2 491,520.6 492,520.3 493,519.9 494,519.6 495,514.8 496,508.7 497,508.9 498,480.5 499,510.7 500,506.2 501,511.5 502,516.3 503,519.1 504,519 505,518.9 506,518.9 507,516.3 508,501.5 509,507.4 510,515 511,513.4 512,507.5 513,514.5 514,517.3 515,517.2 516,519 517,520.6 518,520.4 519,520.4 520,520.3 521,520.3 522,520.2 523,520.1 524,519.9 525,520.2 526,519.9 527,519.9 528,519.6 529,519.6 530,518.1 531,509.9 532,509.2 533,508.5 534,492.5 535,503.3 536,507.2 537,509.6 538,502.8 539,508.4 540,512.7 541,516.3 542,519.8 543,519.7 544,519.7 545,519.6 546,519.6 547,513.6 548,507.6 549,503.5 550,493.5 551,500.3 552,505.4 553,506.9 554,502.2 555,505.2 556,500.5 557,514.9 558,516.1 559,515.5 560,519.9 561,519.2 562,518.9 563,519.1 564,511.1 565,506 566,502 567,490.5 568,497.2 569,513.9 570,512.2 571,512.4 572,515.6 573,518.5 574,518.5 575,517.9 576,510.4 577,502.5 578,514.6 579,514.9 580,514.1 581,515.3 582,514.8 583,508.5 584,513.6 585,515.5 586,517.8 587,519 588,520.7 589,520.5 590,520.6 591,520.6 592,520.6 593,520.7 594,520.6 595,520.6 596,520.5 597,520.5 598,505.1 599,489.6 600,485.6 601,482.5 602,490.3 603,493.2 604,510.7 605,515.5 606,519.1 607,502.4 608,506.8 609,485.5 610,488.8 611,510.4 612,509.1 613,509.7 614,516.8 615,480.5 616,516.1 617,517.7 618,507.7 619,496.5 620,484.5 621,489 622,489.8 623,498.2 624,504.7 625,500.1 626,491.2 627,493 628,492.1 629,509.6 630,516.2 631,501.8 632,492.5 633,490.1 634,483.5 635,487.2 636,491.6 637,491 638,493.4 639,491.4 640,506.1 641,501.1 642,507.5 643,486.4 644,483.5 645,488.1 646,493.8 647,501.2 648,515.6 649,517.9 650,509.5 651,498.1 652,495.5 653,481.5 654,483.9 655,481.9 656,499.8 657,483.7 658,482.3 659,485.6 660,486.3 661,495 662,485.1 663,486 664,500.3 665,483.7 666,481.5 667,486.4 668,494.7 669,500.4 670,485.5 671,491.4 672,504 673,497.7 674,514.1 675,516.6 676,518.2 677,519.2 678,519.5 679,512 680,493.8 681,482.5 682,501.3 683,495.6 684,501.5 685,489 686,508.7 687,490.9 688,492.6 689,507.6 690,505.1 691,505.8 692,502.5 693,507.7 694,510.1 695,512.1 696,493.9 697,477.5 698,482.6 699,499 700,496.6 701,512.6 702,510.8 703,514.4 704,505.2 705,508.7 706,509.8 707,503 708,492.5 709,502.7 710,507.3 711,506.6 712,510.5 713,511 714,479.5 715,497.4 716,491.6 717,505.4 718,511.7 719,509.8 720,514.1 721,516.7 722,511.7 723,485.5 724,479.5 725,489.7 726,503.9 727,489.1 728,479.5 729,501.7 730,483.4 731,491 732,496.7 733,504.2 734,508.1 735,515.9 736,519.8 737,519.9 738,519.8 739,519.8 740,519.8 741,514.3 742,510.4 743,509.4 744,506.5 745,507.1 746,515 747,510 748,504.4 749,498.6 750,481.5 751,488.5 752,501.8 753,494.5 754,504.7 755,506.6 756,503.9 757,489.1 758,505.3 759,481.5 760,491.5 761,497.2 762,505.6 763,509.9 764,511.8 765,509.6 766,507.5 767,497.7 768,493 769,486.5 770,491.5 771,492.3 772,508.8 773,508.3 774,491.4 775,496.4 776,479.5 777,487.2 778,510.7 779,509.8 780,509.1 781,513.6 782,510.6 783,494.1 784,472.5 785,488.5 786,510.1 787,506.2 788,508.2 789,514.2 790,517.1 791,515.9 792,512.6 793,494.4 794,480.5 795,492.7 796,503.7 797,493.6 798,480.5 799,506.9 800,509.4 801,511.3 802,514.2 803,518.9 804,518.7 805,519 806,518.6 807,518.9 808,518.9 809,518.7 810,518.9 811,516 812,509.7 813,514 814,502.5 815,506.7 816,507.2 817,514.1 818,512.2 819,507.5 820,512 821,516.4 822,511 823,509.6 824,504.7 825,507 826,490.5 827,508.9 828,493 829,505.9 830,501.6 831,508.6 832,491.5 833,500.3 834,508.2 835,479.5 836,497.4 837,511.9 838,492.5 839,495.6 840,507.5 841,496.7 842,499.3 843,507.1 844,506.9 845,512.1 846,517.3 847,516.9 848,504.9 849,493.6 850,479.5 851,482.5 852,484.1 853,495 854,494.9 855,502.7 856,507.4 857,505 858,510.7 859,513.1 860,515.9 861,516.9 862,519.6 863,520.1L863,522.7 862,523.4 861,525.9 860,528.5 859,529.5 858,535.4 857,539.2 856,537.6 855,551.1 854,554.9 853,543.7 852,561.5 851,547 850,537 849,533.4 848,532.2 847,525.2 846,526.7 845,525.1 844,534.2 843,530.4 842,538.8 841,541.9 840,551.5 839,549.9 838,545.2 837,542 836,546.9 835,550.3 834,558.5 833,551.8 832,540.3 831,542.8 830,535.7 829,542.3 828,542.3 827,540.3 826,546.5 825,533.9 824,538.3 823,536.4 822,530.4 821,528.6 820,526.2 819,527.2 818,526 817,529.3 816,529.8 815,526.9 814,532.5 813,529.4 812,529.4 811,529.1 810,524 809,523.9 808,524.2 807,524.3 806,524.2 805,524.1 804,524.3 803,523.9 802,527 801,529.5 800,538.5 799,540.5 798,549.5 797,539.5 796,550.4 795,556.5 794,549.3 793,533.9 792,533.9 791,525.5 790,526 789,526 788,530.4 787,532.2 786,543.2 785,539.7 784,565.5 783,550.3 782,529.4 781,529.5 780,529.1 779,533.7 778,539.5 777,540.6 776,539.2 775,542.9 774,537.8 773,543.8 772,538.4 771,538.1 770,544.8 769,550.5 768,543.2 767,532.5 766,535.2 765,527.2 764,528.3 763,529.1 762,531.3 761,535.6 760,545 759,556.5 758,551.7 757,550.3 756,542.7 755,537.9 754,536.8 753,543.9 752,536.5 751,539 750,556.5 749,540.8 748,536.2 747,530.4 746,530.2 745,529.9 744,530.5 743,525.7 742,528.4 741,526.1 740,523.4 739,523.5 738,523.3 737,523.1 736,523.4 735,524.9 734,532.1 733,540.1 732,543.1 731,542.5 730,545.7 729,539.6 728,551.5 727,548.9 726,545.2 725,535.9 724,562.5 723,556.8 722,549 721,525 720,527.1 719,531.4 718,529.7 717,536.4 716,531.3 715,575.5 714,552.1 713,548.1 712,533.5 711,534.3 710,535.2 709,539.1 708,534.3 707,552.5 706,547 705,541.1 704,534.3 703,533.6 702,527.6 701,536.8 700,542.8 699,535.4 698,546.9 697,560.5 696,548.1 695,527.6 694,530.1 693,529 692,533.3 691,531.8 690,535.9 689,538.5 688,541.3 687,531.9 686,543.5 685,532.8 684,548 683,533.1 682,542.6 681,550.5 680,541.5 679,535 678,523.9 677,523.8 676,524.7 675,525.2 674,528.3 673,531.5 672,534.8 671,544 670,549.1 669,550 668,551.8 667,553.1 666,558.5 665,537.4 664,546.6 663,532.8 662,554.2 661,553.7 660,541.9 659,544 658,540.8 657,536.6 656,534.2 655,539.3 654,539.8 653,534.7 652,539.7 651,531.7 650,530.8 649,525.9 648,529.5 647,535.4 646,536.5 645,531.9 644,540.4 643,533.2 642,539.3 641,541.2 640,541.5 639,538 638,529.1 637,539.1 636,537.4 635,533.7 634,541.5 633,529.8 632,532.3 631,532.7 630,525.7 629,525.4 628,535.9 627,535.2 626,532.6 625,539.5 624,541.2 623,537.1 622,542 621,543.3 620,544.5 619,536.8 618,528.7 617,525.2 616,526.2 615,552.5 614,525.6 613,528.9 612,534.4 611,539.5 610,529.7 609,541.5 608,528.1 607,528.8 606,524.4 605,526.3 604,533.4 603,534.9 602,541.6 601,551.5 600,542.6 599,540 598,536.5 597,522.5 596,522.4 595,522.4 594,522.4 593,522.4 592,522.4 591,522.3 590,522.4 589,522.4 588,522.5 587,523.3 586,524.4 585,525.4 584,527.5 583,530.5 582,525.6 581,526.4 580,526 579,527.2 578,529.7 577,532.5 576,527.8 575,525.4 574,524.9 573,524.4 572,526.4 571,527.5 570,529.4 569,534.4 568,530.6 567,547.5 566,539.4 565,535.5 564,528.2 563,524.1 562,523.7 561,523.6 560,523.5 559,526.3 558,525.7 557,528 556,531.7 555,527.6 554,534.5 553,529.4 552,534.2 551,535.2 550,541.5 549,534.2 548,531.4 547,527.1 546,523.3 545,523.3 544,523.3 543,523.2 542,523.3 541,526.7 540,525 539,529.8 538,533.8 537,535.2 536,539.1 535,537.5 534,546.5 533,533.8 532,535.5 531,527.4 530,528.4 529,523.2 528,523.2 527,523.1 526,523.1 525,522.9 524,523 523,522.9 522,522.7 521,522.7 520,522.7 519,522.6 518,522.5 517,522.4 516,523.4 515,524.6 514,526.3 513,528.6 512,529.2 511,531.3 510,534.7 509,534.8 508,541.5 507,532.5 506,524.2 505,523.8 504,523.6 503,523.4 502,526.1 501,527.3 500,528.5 499,534.5 498,548.5 497,531 496,529.6 495,528.4 494,523.3 493,522.9 492,522.8 491,522.3 490,524.7 489,526.9 488,526.1 487,531 486,534.2 485,531.7 484,533.8 483,534.8 482,549.5 481,543 480,536 479,528.8 478,526 477,522.3 476,522.4 475,522.5 474,522.4 473,522.4 472,524.5 471,526.8 470,526.3 469,529.7 468,533.7 467,530.9 466,537.6 465,545.5 464,540.3 463,532.2 462,531.1 461,532.6 460,530.6 459,522.3 458,522.4 457,522.4 456,522.4 455,522.3 454,522.3 453,522.4 452,522.5 451,522.4 450,522.3 449,522.3 448,522.5 447,522.4 446,522.4 445,524.4 444,525.5 443,525 442,526.4 441,526.4 440,529.3 439,530.5 438,524.9 437,525.3 436,525.2 435,525 434,525.6 433,527.5 432,526.3 431,526.1 430,525.2 429,525.8 428,524.8 427,530.5 426,525 425,525.3 424,545.5 423,525.9 422,526.1 421,525.4 420,527.3 419,531.8 418,535.5 417,522.4 416,522.5Z" fill="#2a4b42"/>
<path d="M863,248.1 864,248.5 865,248.6 866,248.5 867,248.6 868,248.7 869,248.5 870,243.1 871,231.6 872,220.5 873,238.5 874,240.8 875,245.3 876,245 877,246 878,247.1 879,248.6 880,248.6 881,248.5 882,248.6 883,248.6 884,248.7 885,248.6 886,244.4 887,240.4 888,236.3 889,216.5 890,242.3 891,243.7 892,240.9 893,244.2 894,246.2 895,247.2 896,248.6 897,248.6 898,248.5 899,248.6 900,248.6 901,248.6 902,248.7 903,248.6 904,243.1 905,238.6 906,239.5 907,218.5 908,238.2 909,234.1 910,236.1 911,242.2 912,241.8 913,244.8 914,245.6 915,247.7 916,247.9 917,248.1 918,248.4 919,248.4 920,248.6 921,243.7 922,241.2 923,226.5 924,216.5 925,234.8 926,228 927,240.4 928,232 929,227.2 930,203.5 931,232.3 932,241.9 933,241.5 934,245.5 935,247.5 936,248.2 937,248.6 938,242.9 939,235.7 940,235.3 941,210.5 942,227.4 943,231.5 944,232.1 945,239.2 946,243 947,245 948,247.9 949,246.1 950,232.4 951,217.5 952,230.7 953,232.4 954,236.9 955,239 956,240.3 957,244.6 958,244 959,246.4 960,248.5 961,248.5 962,248.7 963,248.6 964,248.5 965,248.7 966,248.5 967,248.6 968,248.6 969,248.7 970,248.6 971,248.6 972,248.5 973,247.7 974,232.7 975,201.5 976,232.6 977,220.4 978,237 979,228.1 980,219 981,217.5 982,238.3 983,221.1 984,224.7 985,224.5 986,227.1 987,235 988,238.5 989,241.5 990,227.9 991,221.2 992,219.2 993,212.5 994,213.1 995,216.4 996,223 997,238 998,229.2 999,218.4 1000,218 1001,216.5 1002,226.2 1003,212.5 1004,217 1005,234.8 1006,218.7 1007,236.7 1008,218.3 1009,235.5 1010,233.4 1011,148.5 1012,233.1 1013,241.3 1014,238.4 1015,245.4 1016,242.6 1017,245.4 1018,239.4 1019,234.8 1020,229.6 1021,208.5 1022,225.5 1023,235.8 1024,235.3 1025,208.5 1026,213.6 1027,233.8 1028,225.3 1029,240.5 1030,237.2 1031,243.6 1032,247.7 1033,247.5 1034,247.8 1035,247.8 1036,247.6 1037,220.9 1038,213.4 1039,208.3 1040,209.1 1041,203.5 1042,227.7 1043,215.9 1044,214.5 1045,213.3 1046,215.8 1047,212.3 1048,212.8 1049,210.3 1050,207.5 1051,229.7 1052,226.9 1053,212.6 1054,213.9 1055,220 1056,212.4 1057,233.4 1058,215.4 1059,216.1 1060,216.1 1061,221 1062,225.2 1063,211.4 1064,236.3 1065,225.1 1066,207.5 1067,219.6 1068,221.7 1069,214.7 1070,229.3 1071,239.4 1072,237.8 1073,241.3 1074,246.1 1075,248.6 1076,248.6 1077,248.5 1078,248.6 1079,235 1080,174.5 1081,232.7 1082,221.5 1083,217.5 1084,228 1085,228.9 1086,232.5 1087,244.3 1088,232.4 1089,232.4 1090,223.8 1091,211.5 1092,219.7 1093,230.1 1094,230.5 1095,217.5 1096,238.1 1097,229.7 1098,236.8 1099,243 1100,247.6 1101,247.7 1102,247.9 1103,247.7 1104,247.6 1105,247.5 1106,238.9 1107,221.5 1108,237.9 1109,246.2 1110,246.9 1111,246.7 1112,237.1 1113,227.5 1114,245.5 1115,247.6 1116,246.5 1117,244.5 1118,246.2 1119,247.6 1120,249.5L1120,249.5 1119,251.1 1118,251.8 1117,252.5 1116,251.9 1115,251.3 1114,253.9 1113,261.5 1112,254.2 1111,251.3 1110,251.3 1109,254 1108,257.8 1107,265.5 1106,256.9 1105,251.1 1104,251.3 1103,251.3 1102,251.3 1101,251.1 1100,251.3 1099,255.3 1098,257.8 1097,269.2 1096,261.8 1095,279.5 1094,267.8 1093,274.1 1092,277.2 1091,283.5 1090,279.7 1089,268.5 1088,261.8 1087,259.2 1086,263.3 1085,270.2 1084,268.3 1083,286.5 1082,263.9 1081,278.6 1080,286.5 1079,266.9 1078,250.5 1077,250.5 1076,250.4 1075,250.4 1074,252.3 1073,257 1072,259.6 1071,263.8 1070,266.8 1069,286.9 1068,295.5 1067,288.3 1066,264.3 1065,278.2 1064,284 1063,282.5 1062,273.3 1061,271 1060,282.3 1059,267.4 1058,266.8 1057,266.7 1056,279.9 1055,278 1054,277.6 1053,268.2 1052,277.7 1051,280.5 1050,279.8 1049,282.3 1048,265.2 1047,274.9 1046,285.5 1045,267.6 1044,265.8 1043,282.9 1042,281.1 1041,286.5 1040,264.3 1039,278.6 1038,272.3 1037,262.6 1036,251.5 1035,251.2 1034,251.4 1033,251.1 1032,251.3 1031,253.7 1030,258.1 1029,264.3 1028,267.6 1027,270.7 1026,270 1025,284.5 1024,260.9 1023,260.3 1022,272.9 1021,293.5 1020,262.3 1019,278 1018,264.7 1017,254.3 1016,253.3 1015,257.4 1014,258.3 1013,260.5 1012,270.1 1011,316.5 1010,286.1 1009,277.7 1008,277.7 1007,277.7 1006,277.7 1005,266.9 1004,277.4 1003,281.5 1002,259.5 1001,266.5 1000,259.4 999,259.5 998,271.7 997,278 996,271 995,272.5 994,261.5 993,281.5 992,267.5 991,271 990,262.7 989,257.1 988,256.8 987,257 986,269.7 985,264.5 984,262.1 983,260.3 982,269.7 981,278.5 980,277.4 979,273.9 978,271 977,267.3 976,262.3 975,288.5 974,266.1 973,251.3 972,250.3 971,250.4 970,250.4 969,250.3 968,250.5 967,250.4 966,250.4 965,250.4 964,250.3 963,250.3 962,250.4 961,250.3 960,250.4 959,252.3 958,254.3 957,254.3 956,257.1 955,255.9 954,254.9 953,261 952,260.3 951,274.5 950,262 949,253 948,251.4 947,253.3 946,254.6 945,259.5 944,256.5 943,261.2 942,277.4 941,295.5 940,266.5 939,263.1 938,254.1 937,250.3 936,250.9 935,251.5 934,253.3 933,252.2 932,257.7 931,262.8 930,273.5 929,264.4 928,267.1 927,263.2 926,280.5 925,272.8 924,270 923,266.4 922,261.4 921,254.5 920,250.4 919,250.4 918,250.4 917,250.3 916,250.4 915,250.3 914,251.9 913,253.9 912,255.6 911,258.6 910,261.1 909,257.2 908,265.2 907,276.5 906,265.7 905,259.2 904,254 903,250.5 902,250.3 901,250.4 900,250.3 899,250.4 898,250.3 897,250.4 896,250.3 895,251.2 894,252.2 893,254.8 892,255.5 891,259.5 890,254.9 889,272.5 888,258.5 887,253.9 886,253.8 885,250.3 884,250.4 883,250.4 882,250.5 881,250.4 880,250.4 879,250.4 878,251.5 877,252.3 876,253.9 875,253.8 874,253.9 873,257.7 872,269.5 871,261.1 870,254.7 869,250.4 868,250.4 867,250.4 866,250.4 865,250.4 864,250.4 863,250.8Z" fill="#52e2a6"/><path d="M863,520.1 864,520.6 865,520.5 866,520.7 867,520.6 868,520.6 869,520.6 870,513.1 871,504.9 872,492.5 873,512.7 874,514.1 875,513.9 876,518.6 877,517.9 878,519.1 879,520.6 880,520.6 881,520.6 882,520.5 883,520.6 884,520.6 885,520.7 886,517.1 887,514.9 888,502.8 889,488.5 890,508.2 891,510.9 892,515.4 893,518.5 894,518 895,519.5 896,520.6 897,520.7 898,520.6 899,520.6 900,520.6 901,520.7 902,520.5 903,520.5 904,515.8 905,513.9 906,505.2 907,490.5 908,498.6 909,504.1 910,510.8 911,515.5 912,514.5 913,515.6 914,517.9 915,519.7 916,519.9 917,520 918,520.2 919,520.4 920,520.7 921,514.1 922,509.8 923,505.1 924,488.5 925,494 926,498.3 927,500.3 928,505.1 929,490 930,475.5 931,504.7 932,510.1 933,518 934,516.8 935,519.6 936,520.3 937,520.6 938,517.1 939,508.4 940,498.2 941,482.5 942,494 943,509 944,504.5 945,510.8 946,513.8 947,517 948,519.8 949,518.2 950,507.4 951,489.5 952,503.1 953,504.2 954,506.8 955,516.5 956,514.5 957,515.9 958,515.7 959,518.4 960,520.5 961,520.6 962,520.7 963,520.6 964,520.7 965,520.5 966,520.6 967,520.7 968,520.7 969,520.5 970,520.6 971,520.6 972,520.7 973,519.7 974,491.6 975,473.5 976,501.2 977,492 978,509.8 979,498.8 980,502.5 981,489.5 982,491 983,503.9 984,495.4 985,496.7 986,499.1 987,505.3 988,509.6 989,514.4 990,501.4 991,493 992,498.4 993,484.5 994,506.1 995,498.3 996,487.5 997,486.5 998,489.9 999,492.1 1000,490.6 1001,491.5 1002,501.5 1003,484.5 1004,487.4 1005,504.7 1006,506.3 1007,506.1 1008,492.2 1009,489.8 1010,482.5 1011,420.5 1012,500.4 1013,507.6 1014,515.2 1015,511.5 1016,514.1 1017,516.7 1018,505.5 1019,493.9 1020,504.2 1021,480.5 1022,504.7 1023,500.2 1024,500 1025,480.5 1026,486.2 1027,493.6 1028,509.8 1029,512 1030,515.3 1031,515.5 1032,519.8 1033,519.7 1034,519.9 1035,519.7 1036,519.8 1037,499.8 1038,484.5 1039,502.3 1040,479.5 1041,475.5 1042,480.7 1043,487.5 1044,502.6 1045,496.2 1046,486.6 1047,493.9 1048,485.8 1049,484.6 1050,479.5 1051,480.5 1052,481.4 1053,504.2 1054,482.1 1055,499.4 1056,486 1057,485 1058,499 1059,499 1060,506.2 1061,499.2 1062,484.7 1063,506.6 1064,491.3 1065,480.8 1066,479.5 1067,484.2 1068,482.8 1069,502.3 1070,492.7 1071,499.3 1072,507.8 1073,513.7 1074,517.6 1075,520.5 1076,520.5 1077,520.7 1078,520.5 1079,501.1 1080,446.5 1081,502.1 1082,492.5 1083,489.5 1084,508.4 1085,497.4 1086,504.9 1087,514.2 1088,504.5 1089,493.9 1090,498.7 1091,483.5 1092,499.6 1093,494.5 1094,492.9 1095,489.5 1096,499.2 1097,506 1098,508.4 1099,516.4 1100,519.9 1101,519.7 1102,519.8 1103,519.9 1104,519.8 1105,519.6 1106,510 1107,493.5 1108,507.9 1109,516.1 1110,518.5 1111,518.5 1112,510 1113,499.5 1114,514.8 1115,519.5 1116,518.4 1117,516.5 1118,518.2 1119,519.9 1120,521.5L1120,521.5 1119,523.5 1118,523.7 1117,524.5 1116,523.9 1115,523.2 1114,525.6 1113,533.5 1112,528.7 1111,523.4 1110,523.5 1109,525.9 1108,527.7 1107,537.5 1106,524.8 1105,523.2 1104,523.3 1103,523.1 1102,523.2 1101,523.4 1100,523.3 1099,526.6 1098,526.9 1097,537.6 1096,545.8 1095,551.5 1094,543.2 1093,540.3 1092,549.6 1091,555.5 1090,550.8 1089,549 1088,535.2 1087,527 1086,538.6 1085,539.5 1084,542.4 1083,558.5 1082,535.1 1081,551.1 1080,558.5 1079,541.2 1078,522.5 1077,522.4 1076,522.4 1075,522.4 1074,524.1 1073,526.9 1072,531.1 1071,534.5 1070,549 1069,555.4 1068,567.5 1067,564.3 1066,556.7 1065,558.1 1064,546.7 1063,545.4 1062,544.4 1061,554.9 1060,538.8 1059,535.5 1058,550.6 1057,545 1056,538.1 1055,535.4 1054,550.2 1053,550.9 1052,549.9 1051,551 1050,554.2 1049,553.5 1048,554.4 1047,554.9 1046,557.5 1045,538.9 1044,548.1 1043,534.3 1042,537.8 1041,558.5 1040,544.3 1039,550.5 1038,549.6 1037,545.2 1036,523.5 1035,523.2 1034,523.1 1033,523.4 1032,523.3 1031,525.6 1030,529.5 1029,531.5 1028,539.3 1027,544.4 1026,549.8 1025,556.5 1024,541.3 1023,539.4 1022,533.9 1021,565.5 1020,557.2 1019,531.4 1018,532.2 1017,526.3 1016,529.3 1015,529.5 1014,529.2 1013,529 1012,541.5 1011,588.5 1010,541.8 1009,537.7 1008,550.6 1007,535.8 1006,544.9 1005,545.4 1004,552.4 1003,553.5 1002,552.1 1001,542.6 1000,549 999,542.7 998,542.9 997,540.2 996,537.3 995,538.1 994,544.1 993,553.5 992,546 991,541.2 990,538.8 989,530.9 988,535 987,534.6 986,537.5 985,533 984,531.8 983,545.4 982,544.4 981,550.5 980,550 979,537.7 978,543.2 977,546.9 976,551.4 975,560.5 974,546.2 973,523.3 972,522.3 971,522.4 970,522.5 969,522.4 968,522.4 967,522.5 966,522.5 965,522.3 964,522.3 963,522.4 962,522.3 961,522.4 960,522.4 959,524.4 958,526.2 957,525.1 956,529.5 955,531.5 954,534.3 953,529.1 952,541.8 951,546.5 950,530.2 949,525.1 948,523.4 947,524.8 946,527 945,530.6 944,529.7 943,538.8 942,538.7 941,567.5 940,542.4 939,527.2 938,527.3 937,522.5 936,522.9 935,523.1 934,525.2 933,527.3 932,532.5 931,539.1 930,545.5 929,543 928,534.7 927,538.4 926,552.5 925,539.6 924,537.3 923,529.8 922,531.2 921,528 920,522.4 919,522.5 918,522.5 917,522.3 916,522.4 915,522.3 914,524.4 913,526.2 912,525.3 911,529.8 910,532.3 909,534.3 908,534.5 907,548.5 906,534.2 905,530.2 904,526.2 903,522.5 902,522.4 901,522.4 900,522.4 899,522.4 898,522.4 897,522.5 896,522.4 895,523.5 894,524.3 893,526.6 892,526 891,526.3 890,528 889,544.5 888,531.1 887,526.8 886,525.5 885,522.3 884,522.3 883,522.4 882,522.4 881,522.4 880,522.4 879,522.4 878,523.2 877,524.4 876,525.7 875,524.7 874,529 873,527.9 872,541.5 871,535.5 870,526.8 869,522.5 868,522.3 867,522.4 866,522.5 865,522.4 864,522.5 863,522.7Z" fill="#52e2a6"/>
<path d="M295 385H416.3M863.4 385H1120" stroke="#3d6a4a" stroke-width="1.2"/>
<path d="M416.3 385H863.4" stroke="#a9b4ae" stroke-width="1.2"/>
<path d="M295.8 96V657" stroke="#c8c8c8" stroke-width="1" stroke-dasharray="1 1.2" opacity="0.85"/>
<path d="M367.2 96V657" stroke="#c8c8c8" stroke-width="1" stroke-dasharray="1 1.2" opacity="0.85"/>
<path d="M897.3 96V657" stroke="#c8c8c8" stroke-width="1" stroke-dasharray="1 1.2" opacity="0.85"/>
<path d="M416.3 113V657" stroke="#e0332e" stroke-width="1"/>
</svg>
<svg style="left:0;top:0" width="1280" height="798" viewBox="0 0 1280 798">
<defs><clipPath id="os"><rect x="411.0" y="61.5" width="425.5" height="21.0"/></clipPath></defs>
<rect x="293" y="61.5" width="827" height="21.0" fill="#000"/>
<rect x="293.5" y="62.0" width="792" height="20.0" rx="3" fill="#3a3a3a" stroke="#6e6e6e" stroke-width="1"/>
<rect x="411.0" y="62.5" width="425.5" height="19.0" fill="#f6f6f8"/>
<path d="M297.5 66.7H411.0M836.5 66.7H1120" stroke="#3c9f78" stroke-width="0.9"/>
<path d="M411.0 66.7H836.5" stroke="#9aa39f" stroke-width="0.8"/>
<path d="M297.5 77.5H411.0M836.5 77.5H1120" stroke="#3c9f78" stroke-width="0.9"/>
<path d="M411.0 77.5H836.5" stroke="#9aa39f" stroke-width="0.8"/>
<path d="M295,66.7 296,66.7 297,66.7 298,66.7 299,66.7 300,66.7 301,66.7 302,66.7 303,66.7 304,66.7 305,66.7 306,66.7 307,66.7 308,66.7 309,66.7 310,66.7 311,66.7 312,66.7 313,66.7 314,66.7 315,66.7 316,66.7 317,66.7 318,66.7 319,66.7 320,66.7 321,66.7 322,66.7 323,66.7 324,66.7 325,66.7 326,66.7 327,66.7 328,66.7 329,66.7 330,66.7 331,66.7 332,66.7 333,66.7 334,66.7 335,66.7 336,66.7 337,66.7 338,66.7 339,66.7 340,66.7 341,66.7 342,66.7 343,66.7 344,66.7 345,66.7 346,66.7 347,66.7 348,66.7 349,66.7 350,66.7 351,66.7 352,66.7 353,66.7 354,66.7 355,66.7 356,66.7 357,66.7 358,66.7 359,66.7 360,66.7 361,66.7 362,66.7 363,66.7 364,66.7 365,66.7 366,66.7 367,66.7 368,66.7 369,66.7 370,66.7 371,66.7 372,66.7 373,66.7 374,66.7 375,66.7 376,66.7 377,65.9 378,65.9 379,65.8 380,65.9 381,66.7 382,66.7 383,66.7 384,66.7 385,66.7 386,65.6 387,66.7 388,65.6 389,65.8 390,65.8 391,65.8 392,66.7 393,66.7 394,66.7 395,66.7 396,66.7 397,65.8 398,65.8 399,65.8 400,65.8 401,65.8 402,65.7 403,65.8 404,65.9 405,66.7 406,66.7 407,66.7 408,66.7 409,66.7 410,66.7 411,66.7L411,66.7 410,66.7 409,66.7 408,66.7 407,66.7 406,66.7 405,66.7 404,67.5 403,67.6 402,67.7 401,67.6 400,67.6 399,67.6 398,67.6 397,67.6 396,66.7 395,66.7 394,66.7 393,66.7 392,66.7 391,67.6 390,67.6 389,67.6 388,67.8 387,66.7 386,67.8 385,66.7 384,66.7 383,66.7 382,66.7 381,66.7 380,67.5 379,67.6 378,67.5 377,67.5 376,66.7 375,66.7 374,66.7 373,66.7 372,66.7 371,66.7 370,66.7 369,66.7 368,66.7 367,66.7 366,66.7 365,66.7 364,66.7 363,66.7 362,66.7 361,66.7 360,66.7 359,66.7 358,66.7 357,66.7 356,66.7 355,66.7 354,66.7 353,66.7 352,66.7 351,66.7 350,66.7 349,66.7 348,66.7 347,66.7 346,66.7 345,66.7 344,66.7 343,66.7 342,66.7 341,66.7 340,66.7 339,66.7 338,66.7 337,66.7 336,66.7 335,66.7 334,66.7 333,66.7 332,66.7 331,66.7 330,66.7 329,66.7 328,66.7 327,66.7 326,66.7 325,66.7 324,66.7 323,66.7 322,66.7 321,66.7 320,66.7 319,66.7 318,66.7 317,66.7 316,66.7 315,66.7 314,66.7 313,66.7 312,66.7 311,66.7 310,66.7 309,66.7 308,66.7 307,66.7 306,66.7 305,66.7 304,66.7 303,66.7 302,66.7 301,66.7 300,66.7 299,66.7 298,66.7 297,66.7 296,66.7 295,66.7Z" fill="#49c996"/><path d="M295,77.5 296,77.5 297,77.5 298,77.5 299,77.5 300,77.5 301,77.5 302,77.5 303,77.5 304,77.5 305,77.5 306,77.5 307,77.5 308,77.5 309,77.5 310,77.5 311,77.5 312,77.5 313,77.5 314,77.5 315,77.5 316,77.5 317,77.5 318,77.5 319,77.5 320,77.5 321,77.5 322,77.5 323,77.5 324,77.5 325,77.5 326,77.5 327,77.5 328,77.5 329,77.5 330,77.5 331,77.5 332,77.5 333,77.5 334,77.5 335,77.5 336,77.5 337,77.5 338,77.5 339,77.5 340,77.5 341,77.5 342,77.5 343,77.5 344,77.5 345,77.5 346,77.5 347,77.5 348,77.5 349,77.5 350,77.5 351,77.5 352,77.5 353,77.5 354,77.5 355,77.5 356,77.5 357,77.5 358,77.5 359,77.5 360,77.5 361,77.5 362,77.5 363,77.5 364,77.5 365,77.5 366,77.5 367,77.5 368,77.5 369,77.5 370,77.5 371,77.5 372,77.5 373,77.5 374,77.5 375,77.5 376,77.5 377,76.6 378,76.6 379,76.6 380,77.5 381,77.5 382,77.5 383,77.5 384,77.5 385,77.5 386,76.6 387,76.5 388,76.5 389,76.6 390,76.5 391,76.6 392,77.5 393,77.5 394,77.5 395,77.5 396,76.6 397,76.6 398,76.5 399,76.5 400,76.6 401,76.5 402,77.5 403,77.5 404,76.7 405,77.5 406,77.5 407,77.5 408,77.5 409,77.5 410,77.5 411,77.5L411,77.5 410,77.5 409,77.5 408,77.5 407,77.5 406,77.5 405,77.5 404,78.3 403,77.5 402,77.5 401,78.5 400,78.4 399,78.5 398,78.5 397,78.4 396,78.4 395,77.5 394,77.5 393,77.5 392,77.5 391,78.4 390,78.5 389,78.4 388,78.5 387,78.5 386,78.4 385,77.5 384,77.5 383,77.5 382,77.5 381,77.5 380,77.5 379,78.4 378,78.4 377,78.4 376,77.5 375,77.5 374,77.5 373,77.5 372,77.5 371,77.5 370,77.5 369,77.5 368,77.5 367,77.5 366,77.5 365,77.5 364,77.5 363,77.5 362,77.5 361,77.5 360,77.5 359,77.5 358,77.5 357,77.5 356,77.5 355,77.5 354,77.5 353,77.5 352,77.5 351,77.5 350,77.5 349,77.5 348,77.5 347,77.5 346,77.5 345,77.5 344,77.5 343,77.5 342,77.5 341,77.5 340,77.5 339,77.5 338,77.5 337,77.5 336,77.5 335,77.5 334,77.5 333,77.5 332,77.5 331,77.5 330,77.5 329,77.5 328,77.5 327,77.5 326,77.5 325,77.5 324,77.5 323,77.5 322,77.5 321,77.5 320,77.5 319,77.5 318,77.5 317,77.5 316,77.5 315,77.5 314,77.5 313,77.5 312,77.5 311,77.5 310,77.5 309,77.5 308,77.5 307,77.5 306,77.5 305,77.5 304,77.5 303,77.5 302,77.5 301,77.5 300,77.5 299,77.5 298,77.5 297,77.5 296,77.5 295,77.5Z" fill="#49c996"/>
<path d="M411,66.7 412,65.7 413,66.7 414,65.8 415,65.8 416,65.9 417,65.7 418,65.6 419,65.6 420,65.8 421,65.9 422,65.8 423,66.7 424,66.7 425,66.7 426,66.7 427,66.7 428,66.7 429,66.7 430,66.7 431,66 432,65.8 433,65.9 434,65.8 435,65.8 436,65.9 437,66 438,66.7 439,66.7 440,66.7 441,66.7 442,66.7 443,66.7 444,66.7 445,66.7 446,66.7 447,66.7 448,66.7 449,66.7 450,66.7 451,66.7 452,66.7 453,65.8 454,65.8 455,66.7 456,65.6 457,66.7 458,66.7 459,66.7 460,65.7 461,65.7 462,65.9 463,66 464,66.7 465,66.7 466,66.7 467,66.7 468,66.7 469,66.7 470,66.7 471,65.8 472,65.6 473,65.4 474,65.4 475,66.7 476,65.5 477,65.6 478,65.7 479,66.7 480,65.9 481,66.7 482,66.7 483,66.7 484,66.7 485,66.7 486,65.9 487,65.7 488,65.5 489,65.3 490,65.5 491,65.5 492,65.8 493,65.9 494,66.7 495,66.7 496,66.7 497,65.9 498,65.6 499,65.8 500,65.7 501,65.7 502,66.7 503,65.8 504,65.9 505,66.7 506,66.7 507,66.7 508,66.7 509,66.7 510,66.7 511,66.7 512,66.7 513,66.7 514,66.7 515,66.7 516,66.7 517,66.7 518,66.7 519,66.7 520,65.9 521,65.7 522,66.7 523,65.4 524,65.5 525,65.5 526,65.4 527,65.6 528,65.7 529,66.7 530,65.8 531,66.7 532,66.7 533,66.7 534,66.7 535,66.7 536,65.9 537,65.8 538,65.7 539,66.7 540,65.7 541,65.6 542,65.8 543,65.7 544,66.7 545,66.7 546,65.7 547,66.7 548,66.7 549,66.7 550,66.7 551,66.7 552,66.7 553,66.7 554,65.7 555,66.7 556,65.5 557,66.7 558,65.7 559,65.8 560,65.8 561,66.7 562,66.7 563,66.7 564,65.8 565,65.8 566,65.8 567,65.9 568,66.7 569,66.7 570,65.9 571,65.9 572,65.9 573,66.7 574,66.7 575,66.7 576,66.7 577,66.7 578,66.7 579,66.7 580,66.7 581,66.7 582,66.7 583,66.7 584,65.9 585,66.7 586,65.3 587,66.7 588,65.2 589,66.7 590,65.4 591,65.6 592,65.8 593,66.7 594,65.5 595,65.4 596,65.4 597,65.5 598,65.5 599,66.7 600,66.7 601,65.4 602,66.7 603,65.6 604,65.7 605,66.7 606,66.7 607,65.5 608,66.7 609,65.6 610,65.6 611,65.6 612,65.7 613,65.6 614,65.5 615,65.6 616,65.8 617,65.7 618,66.7 619,66.7 620,66.7 621,65.5 622,65.5 623,65.5 624,65.5 625,65.6 626,65.4 627,65.4 628,66.7 629,65.6 630,66.7 631,65.5 632,65.6 633,66.7 634,65.7 635,66.7 636,66.7 637,66.7 638,65.5 639,66.7 640,65.6 641,65.5 642,65.4 643,65.5 644,65.5 645,65.1 646,66.7 647,65.5 648,65.3 649,65.3 650,65.1 651,65.3 652,65.1 653,65.5 654,65.5 655,65.2 656,66.7 657,66.7 658,65.7 659,66.7 660,66.7 661,66.7 662,65.9 663,66.7 664,65.4 665,65.3 666,65.2 667,65.3 668,65.4 669,65.3 670,65.3 671,65.5 672,66.7 673,66.7 674,65.6 675,66.7 676,65.6 677,66.7 678,65.8 679,65.2 680,65.1 681,65.2 682,66.7 683,65.4 684,66.7 685,66.7 686,65.7 687,65.6 688,65.7 689,65.4 690,65.5 691,65.4 692,65.5 693,66.7 694,65.7 695,65.6 696,65.4 697,65.1 698,66.7 699,66.7 700,65.5 701,65.6 702,65.8 703,65.6 704,65.2 705,66.7 706,65.1 707,66.7 708,65.5 709,66.7 710,65.2 711,65.2 712,65.3 713,66.7 714,65.4 715,65.6 716,66.7 717,65.9 718,66.7 719,66.7 720,66.7 721,66.7 722,66.7 723,65.9 724,65.9 725,65.8 726,65.9 727,65.9 728,66.7 729,65.6 730,65.2 731,65.4 732,65.4 733,65.5 734,65.3 735,65.3 736,65.3 737,66.7 738,65.3 739,65.4 740,65.3 741,65.5 742,65.6 743,65.5 744,65.8 745,65.9 746,65.7 747,65.6 748,65.6 749,65.5 750,66.7 751,65.4 752,66.7 753,65.4 754,65.3 755,65.4 756,65.4 757,65.5 758,65.4 759,66.7 760,65.8 761,66.7 762,65.6 763,65 764,66.7 765,65.1 766,65.2 767,65.5 768,65.7 769,65.9 770,66.7 771,66.7 772,66.7 773,65.5 774,65.5 775,65.3 776,65.2 777,65.2 778,65.3 779,66.7 780,66.7 781,65.7 782,65.9 783,66.7 784,66.7 785,66.7 786,66.7 787,66.7 788,66.7 789,65.9 790,65.9 791,66.7 792,65.8 793,66.7 794,65.8 795,65.8 796,65.9 797,65.9 798,65.8 799,65.9 800,65.6 801,65.8 802,65.6 803,65.6 804,65.6 805,65.3 806,65.5 807,65.7 808,66.7 809,65.4 810,65.6 811,65.4 812,66.7 813,65.4 814,65.3 815,65.6 816,65.3 817,66.7 818,65.5 819,65.5 820,65.4 821,66.7 822,65.8 823,65.9 824,65.8 825,65.6 826,65.3 827,65.4 828,65.2 829,66.7 830,65.3 831,65.3 832,66.7 833,65.6 834,65.7 835,65.6 836,66.7L836,66.7 835,67.8 834,67.7 833,67.8 832,66.7 831,68.1 830,68.1 829,66.7 828,68.2 827,68 826,68.1 825,67.8 824,67.6 823,67.5 822,67.6 821,66.7 820,68 819,67.9 818,67.9 817,66.7 816,68.1 815,67.8 814,68.1 813,68 812,66.7 811,68 810,67.8 809,68 808,66.7 807,67.7 806,67.9 805,68.1 804,67.8 803,67.8 802,67.8 801,67.6 800,67.8 799,67.5 798,67.6 797,67.5 796,67.5 795,67.6 794,67.6 793,66.7 792,67.6 791,66.7 790,67.5 789,67.5 788,66.7 787,66.7 786,66.7 785,66.7 784,66.7 783,66.7 782,67.5 781,67.7 780,66.7 779,66.7 778,68.1 777,68.2 776,68.2 775,68.1 774,67.9 773,67.9 772,66.7 771,66.7 770,66.7 769,67.5 768,67.7 767,67.9 766,68.2 765,68.3 764,66.7 763,68.4 762,67.8 761,66.7 760,67.6 759,66.7 758,68 757,67.9 756,68 755,68 754,68.1 753,68 752,66.7 751,68 750,66.7 749,67.9 748,67.8 747,67.8 746,67.7 745,67.5 744,67.6 743,67.9 742,67.8 741,67.9 740,68.1 739,68 738,68.1 737,66.7 736,68.1 735,68.1 734,68.1 733,67.9 732,68 731,68 730,68.2 729,67.8 728,66.7 727,67.5 726,67.5 725,67.6 724,67.5 723,67.5 722,66.7 721,66.7 720,66.7 719,66.7 718,66.7 717,67.5 716,66.7 715,67.8 714,68 713,66.7 712,68.1 711,68.2 710,68.2 709,66.7 708,67.9 707,66.7 706,68.3 705,66.7 704,68.2 703,67.8 702,67.6 701,67.8 700,67.9 699,66.7 698,66.7 697,68.3 696,68 695,67.8 694,67.7 693,66.7 692,67.9 691,68 690,67.9 689,68 688,67.7 687,67.8 686,67.7 685,66.7 684,66.7 683,68 682,66.7 681,68.2 680,68.3 679,68.2 678,67.6 677,66.7 676,67.8 675,66.7 674,67.8 673,66.7 672,66.7 671,67.9 670,68.1 669,68.1 668,68 667,68.1 666,68.2 665,68.1 664,68 663,66.7 662,67.5 661,66.7 660,66.7 659,66.7 658,67.7 657,66.7 656,66.7 655,68.2 654,67.9 653,67.9 652,68.3 651,68.1 650,68.3 649,68.1 648,68.1 647,67.9 646,66.7 645,68.3 644,67.9 643,67.9 642,68 641,67.9 640,67.8 639,66.7 638,67.9 637,66.7 636,66.7 635,66.7 634,67.7 633,66.7 632,67.8 631,67.9 630,66.7 629,67.8 628,66.7 627,68 626,68 625,67.8 624,67.9 623,67.9 622,67.9 621,67.9 620,66.7 619,66.7 618,66.7 617,67.7 616,67.6 615,67.8 614,67.9 613,67.8 612,67.7 611,67.8 610,67.8 609,67.8 608,66.7 607,67.9 606,66.7 605,66.7 604,67.7 603,67.8 602,66.7 601,68 600,66.7 599,66.7 598,67.9 597,67.9 596,68 595,68 594,67.9 593,66.7 592,67.6 591,67.8 590,68 589,66.7 588,68.2 587,66.7 586,68.1 585,66.7 584,67.5 583,66.7 582,66.7 581,66.7 580,66.7 579,66.7 578,66.7 577,66.7 576,66.7 575,66.7 574,66.7 573,66.7 572,67.5 571,67.5 570,67.5 569,66.7 568,66.7 567,67.5 566,67.6 565,67.6 564,67.6 563,66.7 562,66.7 561,66.7 560,67.6 559,67.6 558,67.7 557,66.7 556,67.9 555,66.7 554,67.7 553,66.7 552,66.7 551,66.7 550,66.7 549,66.7 548,66.7 547,66.7 546,67.7 545,66.7 544,66.7 543,67.7 542,67.6 541,67.8 540,67.7 539,66.7 538,67.7 537,67.6 536,67.5 535,66.7 534,66.7 533,66.7 532,66.7 531,66.7 530,67.6 529,66.7 528,67.7 527,67.8 526,68 525,67.9 524,67.9 523,68 522,66.7 521,67.7 520,67.5 519,66.7 518,66.7 517,66.7 516,66.7 515,66.7 514,66.7 513,66.7 512,66.7 511,66.7 510,66.7 509,66.7 508,66.7 507,66.7 506,66.7 505,66.7 504,67.5 503,67.6 502,66.7 501,67.7 500,67.7 499,67.6 498,67.8 497,67.5 496,66.7 495,66.7 494,66.7 493,67.5 492,67.6 491,67.9 490,67.9 489,68.1 488,67.9 487,67.7 486,67.5 485,66.7 484,66.7 483,66.7 482,66.7 481,66.7 480,67.5 479,66.7 478,67.7 477,67.8 476,67.9 475,66.7 474,68 473,68 472,67.8 471,67.6 470,66.7 469,66.7 468,66.7 467,66.7 466,66.7 465,66.7 464,66.7 463,67.4 462,67.5 461,67.7 460,67.7 459,66.7 458,66.7 457,66.7 456,67.8 455,66.7 454,67.6 453,67.6 452,66.7 451,66.7 450,66.7 449,66.7 448,66.7 447,66.7 446,66.7 445,66.7 444,66.7 443,66.7 442,66.7 441,66.7 440,66.7 439,66.7 438,66.7 437,67.4 436,67.5 435,67.6 434,67.6 433,67.5 432,67.6 431,67.4 430,66.7 429,66.7 428,66.7 427,66.7 426,66.7 425,66.7 424,66.7 423,66.7 422,67.6 421,67.5 420,67.6 419,67.8 418,67.8 417,67.7 416,67.5 415,67.6 414,67.6 413,66.7 412,67.7 411,66.7Z" fill="#1d2a26"/><path d="M411,77.5 412,76.4 413,76.6 414,76.5 415,77.5 416,77.5 417,76.5 418,76.6 419,77.5 420,76.6 421,76.6 422,77.5 423,77.5 424,77.5 425,77.5 426,77.5 427,77.5 428,77.5 429,77.5 430,77.5 431,76.8 432,76.6 433,76.6 434,76.7 435,76.7 436,76.6 437,77.5 438,77.5 439,77.5 440,77.5 441,77.5 442,77.5 443,77.5 444,77.5 445,77.5 446,77.5 447,77.5 448,77.5 449,77.5 450,77.5 451,77.5 452,76.6 453,76.6 454,77.5 455,77.5 456,76.4 457,77.5 458,76.5 459,76.5 460,76.5 461,76.6 462,76.6 463,76.7 464,77.5 465,77.5 466,77.5 467,77.5 468,77.5 469,77.5 470,76.7 471,76.6 472,76.5 473,76.3 474,76.3 475,76.2 476,76.3 477,76.4 478,76.6 479,77.5 480,76.7 481,77.5 482,77.5 483,77.5 484,77.5 485,77.5 486,76.7 487,76.6 488,76.1 489,76.3 490,77.5 491,77.5 492,76.6 493,76.8 494,77.5 495,77.5 496,77.5 497,76.7 498,77.5 499,76.4 500,77.5 501,76.6 502,76.6 503,76.6 504,76.7 505,77.5 506,77.5 507,77.5 508,77.5 509,77.5 510,77.5 511,77.5 512,77.5 513,77.5 514,77.5 515,77.5 516,77.5 517,77.5 518,77.5 519,77.5 520,76.7 521,76.6 522,77.5 523,77.5 524,76.2 525,76.3 526,76.3 527,77.5 528,77.5 529,76.6 530,76.7 531,77.5 532,77.5 533,77.5 534,77.5 535,77.5 536,76.7 537,76.5 538,76.4 539,77.5 540,76.3 541,76.4 542,77.5 543,76.6 544,77.5 545,77.5 546,76.5 547,77.5 548,77.5 549,77.5 550,77.5 551,77.5 552,76.7 553,76.5 554,76.4 555,76.2 556,76.3 557,76.3 558,77.5 559,76.7 560,77.5 561,77.5 562,77.5 563,77.5 564,77.5 565,76.5 566,76.7 567,76.7 568,77.5 569,77.5 570,76.7 571,76.6 572,77.5 573,77.5 574,77.5 575,77.5 576,77.5 577,77.5 578,77.5 579,77.5 580,77.5 581,77.5 582,77.5 583,77.5 584,76.7 585,77.5 586,76.3 587,76.2 588,76.3 589,76.2 590,76.4 591,76.4 592,76.7 593,77.5 594,77.5 595,76.1 596,76.2 597,77.5 598,76.3 599,76.2 600,76.5 601,76.3 602,76.4 603,76.4 604,77.5 605,76.3 606,77.5 607,76.1 608,77.5 609,77.5 610,76.4 611,77.5 612,76.3 613,77.5 614,76.3 615,76.5 616,77.5 617,76.5 618,76.4 619,76.3 620,77.5 621,76.3 622,76.3 623,76.4 624,76.2 625,76.2 626,76.4 627,76.1 628,76.3 629,76.1 630,77.5 631,76.4 632,76.4 633,77.5 634,76.7 635,77.5 636,77.5 637,76.3 638,76.3 639,76.1 640,76.1 641,76.2 642,76 643,77.5 644,76.1 645,76.2 646,76 647,77.5 648,77.5 649,76.2 650,77.5 651,77.5 652,77.5 653,77.5 654,76.2 655,76.1 656,76.2 657,77.5 658,77.5 659,77.5 660,77.5 661,77.5 662,76.7 663,76.4 664,76.3 665,76.1 666,76.2 667,76.3 668,76 669,76.2 670,76.1 671,76.3 672,76.3 673,76.4 674,76.4 675,77.5 676,77.5 677,76.5 678,76.5 679,76.2 680,76.2 681,75.9 682,75.9 683,76.1 684,76.4 685,76.5 686,77.5 687,77.5 688,76.5 689,76.3 690,76.1 691,76.1 692,76.4 693,76.5 694,76.5 695,76.3 696,77.5 697,77.5 698,77.5 699,76 700,76.3 701,77.5 702,77.5 703,76.6 704,76 705,76.1 706,76.1 707,75.9 708,76.2 709,76.1 710,76.2 711,76.1 712,76 713,76.3 714,77.5 715,76.4 716,77.5 717,77.5 718,77.5 719,77.5 720,77.5 721,77.5 722,77.5 723,76.7 724,76.8 725,76.7 726,77.5 727,76.7 728,77.5 729,76.4 730,76.1 731,76.1 732,76 733,76 734,77.5 735,76.2 736,76.3 737,76.4 738,76.3 739,76.1 740,76 741,76 742,76.3 743,77.5 744,76.5 745,76.6 746,76.5 747,77.5 748,76.3 749,77.5 750,76.3 751,77.5 752,76.3 753,76.4 754,76.1 755,76.3 756,76.4 757,76.4 758,76.2 759,76.4 760,76.6 761,77.5 762,77.5 763,75.9 764,76 765,75.8 766,76.2 767,76.5 768,76.5 769,76.7 770,77.5 771,76.5 772,76.3 773,77.5 774,76 775,76.3 776,76.3 777,76.2 778,76.3 779,76.2 780,76.3 781,76.5 782,76.7 783,77.5 784,77.5 785,77.5 786,77.5 787,77.5 788,77.5 789,76.8 790,77.5 791,76.7 792,76.7 793,76.6 794,76.7 795,77.5 796,76.8 797,76.7 798,76.6 799,77.5 800,76.6 801,76.4 802,77.5 803,76.3 804,76.4 805,76.3 806,76.4 807,76.4 808,76.4 809,76.2 810,77.5 811,76.3 812,76.1 813,76.1 814,76.2 815,76.3 816,76.4 817,76.1 818,76.4 819,76.2 820,76.3 821,76.5 822,77.5 823,77.5 824,77.5 825,76.3 826,76 827,77.5 828,76.1 829,75.9 830,77.5 831,76.3 832,76.1 833,76.1 834,76.3 835,77.5 836,76.6L836,78.4 835,77.5 834,78.7 833,78.9 832,78.9 831,78.7 830,77.5 829,79.1 828,78.9 827,77.5 826,79 825,78.7 824,77.5 823,77.5 822,77.5 821,78.5 820,78.7 819,78.8 818,78.6 817,78.9 816,78.6 815,78.7 814,78.8 813,78.9 812,78.9 811,78.7 810,77.5 809,78.8 808,78.6 807,78.6 806,78.6 805,78.7 804,78.6 803,78.7 802,77.5 801,78.6 800,78.4 799,77.5 798,78.4 797,78.3 796,78.2 795,77.5 794,78.3 793,78.4 792,78.3 791,78.3 790,77.5 789,78.2 788,77.5 787,77.5 786,77.5 785,77.5 784,77.5 783,77.5 782,78.3 781,78.5 780,78.7 779,78.8 778,78.7 777,78.8 776,78.7 775,78.7 774,79 773,77.5 772,78.7 771,78.5 770,77.5 769,78.3 768,78.5 767,78.5 766,78.8 765,79.2 764,79 763,79.1 762,77.5 761,77.5 760,78.4 759,78.6 758,78.8 757,78.6 756,78.6 755,78.7 754,78.9 753,78.6 752,78.7 751,77.5 750,78.7 749,77.5 748,78.7 747,77.5 746,78.5 745,78.4 744,78.5 743,77.5 742,78.7 741,79 740,79 739,78.9 738,78.7 737,78.6 736,78.7 735,78.8 734,77.5 733,79 732,79 731,78.9 730,78.9 729,78.6 728,77.5 727,78.3 726,77.5 725,78.3 724,78.2 723,78.3 722,77.5 721,77.5 720,77.5 719,77.5 718,77.5 717,77.5 716,77.5 715,78.6 714,77.5 713,78.7 712,79 711,78.9 710,78.8 709,78.9 708,78.8 707,79.1 706,78.9 705,78.9 704,79 703,78.4 702,77.5 701,77.5 700,78.7 699,79 698,77.5 697,77.5 696,77.5 695,78.7 694,78.5 693,78.5 692,78.6 691,78.9 690,78.9 689,78.7 688,78.5 687,77.5 686,77.5 685,78.5 684,78.6 683,78.9 682,79.1 681,79.1 680,78.8 679,78.8 678,78.5 677,78.5 676,77.5 675,77.5 674,78.6 673,78.6 672,78.7 671,78.7 670,78.9 669,78.8 668,79 667,78.7 666,78.8 665,78.9 664,78.7 663,78.6 662,78.3 661,77.5 660,77.5 659,77.5 658,77.5 657,77.5 656,78.8 655,78.9 654,78.8 653,77.5 652,77.5 651,77.5 650,77.5 649,78.8 648,77.5 647,77.5 646,79 645,78.8 644,78.9 643,77.5 642,79 641,78.8 640,78.9 639,78.9 638,78.7 637,78.7 636,77.5 635,77.5 634,78.3 633,77.5 632,78.6 631,78.6 630,77.5 629,78.9 628,78.7 627,78.9 626,78.6 625,78.8 624,78.8 623,78.6 622,78.7 621,78.7 620,77.5 619,78.7 618,78.6 617,78.5 616,77.5 615,78.5 614,78.7 613,77.5 612,78.7 611,77.5 610,78.6 609,77.5 608,77.5 607,78.9 606,77.5 605,78.7 604,77.5 603,78.6 602,78.6 601,78.7 600,78.5 599,78.8 598,78.7 597,77.5 596,78.8 595,78.9 594,77.5 593,77.5 592,78.3 591,78.6 590,78.6 589,78.8 588,78.7 587,78.8 586,78.7 585,77.5 584,78.3 583,77.5 582,77.5 581,77.5 580,77.5 579,77.5 578,77.5 577,77.5 576,77.5 575,77.5 574,77.5 573,77.5 572,77.5 571,78.4 570,78.3 569,77.5 568,77.5 567,78.3 566,78.3 565,78.5 564,77.5 563,77.5 562,77.5 561,77.5 560,77.5 559,78.3 558,77.5 557,78.7 556,78.7 555,78.8 554,78.6 553,78.5 552,78.3 551,77.5 550,77.5 549,77.5 548,77.5 547,77.5 546,78.5 545,77.5 544,77.5 543,78.4 542,77.5 541,78.6 540,78.7 539,77.5 538,78.6 537,78.5 536,78.3 535,77.5 534,77.5 533,77.5 532,77.5 531,77.5 530,78.3 529,78.4 528,77.5 527,77.5 526,78.7 525,78.7 524,78.8 523,77.5 522,77.5 521,78.4 520,78.3 519,77.5 518,77.5 517,77.5 516,77.5 515,77.5 514,77.5 513,77.5 512,77.5 511,77.5 510,77.5 509,77.5 508,77.5 507,77.5 506,77.5 505,77.5 504,78.3 503,78.4 502,78.4 501,78.4 500,77.5 499,78.6 498,77.5 497,78.3 496,77.5 495,77.5 494,77.5 493,78.2 492,78.4 491,77.5 490,77.5 489,78.7 488,78.9 487,78.4 486,78.3 485,77.5 484,77.5 483,77.5 482,77.5 481,77.5 480,78.3 479,77.5 478,78.4 477,78.6 476,78.7 475,78.8 474,78.7 473,78.7 472,78.5 471,78.4 470,78.3 469,77.5 468,77.5 467,77.5 466,77.5 465,77.5 464,77.5 463,78.3 462,78.4 461,78.4 460,78.5 459,78.5 458,78.5 457,77.5 456,78.6 455,77.5 454,77.5 453,78.4 452,78.4 451,77.5 450,77.5 449,77.5 448,77.5 447,77.5 446,77.5 445,77.5 444,77.5 443,77.5 442,77.5 441,77.5 440,77.5 439,77.5 438,77.5 437,77.5 436,78.4 435,78.3 434,78.3 433,78.4 432,78.4 431,78.2 430,77.5 429,77.5 428,77.5 427,77.5 426,77.5 425,77.5 424,77.5 423,77.5 422,77.5 421,78.4 420,78.4 419,77.5 418,78.4 417,78.5 416,77.5 415,77.5 414,78.5 413,78.4 412,78.6 411,77.5Z" fill="#1d2a26"/>
<path d="M836,66.7 837,65.8 838,66.7 839,66.7 840,66.7 841,66.7 842,66.7 843,66.7 844,66.7 845,66.7 846,65.9 847,65.7 848,65.7 849,65.5 850,66.7 851,65.9 852,66.7 853,66.7 854,66.7 855,66.7 856,66.7 857,66.7 858,66.7 859,66.7 860,66.7 861,66.7 862,65.9 863,65.8 864,65.6 865,65.6 866,65.7 867,65.9 868,66.7 869,66.7 870,66.7 871,66.7 872,66.7 873,66.7 874,66.7 875,66.7 876,66.7 877,66.7 878,66.7 879,66.7 880,66.7 881,65.5 882,65.5 883,65.3 884,65.6 885,65.8 886,65.8 887,65.9 888,66.7 889,66.7 890,66.7 891,66.7 892,66.7 893,66.7 894,66.7 895,65.9 896,65.8 897,65.5 898,65.4 899,65.5 900,65.5 901,66.7 902,65.6 903,66.7 904,65.5 905,65.3 906,65.8 907,65.9 908,66.7 909,66.7 910,66.7 911,66.7 912,66.7 913,66.7 914,65.4 915,65.2 916,66.7 917,65.5 918,65.8 919,65.9 920,66.7 921,66.7 922,65.9 923,66.7 924,65.6 925,66.7 926,65.7 927,65.8 928,65.8 929,66.7 930,65.9 931,66.7 932,66.7 933,66.7 934,66.7 935,66.7 936,66.7 937,66.7 938,66.7 939,66.7 940,66.7 941,66.7 942,66.7 943,66.7 944,66.7 945,65.8 946,65.3 947,65.3 948,65.1 949,65.5 950,66.7 951,65.4 952,66.7 953,65.3 954,65.4 955,65.5 956,66.7 957,65.7 958,65.6 959,65.8 960,65.8 961,65.6 962,66.7 963,65.4 964,65.5 965,66.7 966,65.3 967,65.2 968,65.5 969,65.5 970,65.6 971,65.4 972,65.5 973,65.2 974,65.5 975,65.2 976,65.3 977,65.5 978,66.7 979,65.6 980,65 981,64.8 982,64.8 983,65.4 984,65.7 985,66.7 986,65.9 987,66.7 988,66.7 989,66.7 990,65.2 991,66.7 992,66.7 993,65.4 994,66.7 995,66.7 996,65.2 997,65.3 998,65.5 999,65.5 1000,65.8 1001,65.9 1002,66.7 1003,66.7 1004,66.7 1005,66.7 1006,65.4 1007,65.5 1008,65.3 1009,65.1 1010,65 1011,65.3 1012,65.2 1013,65.2 1014,65.4 1015,65.5 1016,65.2 1017,65.5 1018,66.7 1019,65.4 1020,65.1 1021,65.1 1022,65.3 1023,65.4 1024,65.5 1025,65.3 1026,65.3 1027,65.4 1028,65.4 1029,65.2 1030,66.7 1031,65.4 1032,66.7 1033,65.4 1034,65.4 1035,65.2 1036,65.1 1037,65.4 1038,65.1 1039,65.2 1040,65.5 1041,66.7 1042,65.9 1043,66.7 1044,66.7 1045,66.7 1046,65.8 1047,65.2 1048,65.2 1049,65 1050,66.7 1051,65.2 1052,66.7 1053,65.5 1054,66.7 1055,65.6 1056,65.4 1057,65.2 1058,65.2 1059,65.2 1060,65.3 1061,65.3 1062,66.7 1063,65.5 1064,65.4 1065,65.7 1066,65.7 1067,66.7 1068,66.7 1069,66.7 1070,66.7 1071,66.7 1072,66.7 1073,66.7 1074,65.8 1075,65.5 1076,65.9 1077,66.7 1078,66.7 1079,65.9 1080,65.8 1081,65.8 1082,66.7 1083,66.7 1084,66.7 1085,66.7 1086,66.7 1087,66.7 1088,66.7 1089,66.7 1090,66.7 1091,66.7 1092,66.7 1093,66.7 1094,66.7 1095,66.7 1096,66.7 1097,66.7 1098,66.7 1099,66.7 1100,66.7 1101,66.7 1102,66.7 1103,66.7 1104,66.7 1105,66.7 1106,66.7 1107,66.7 1108,66.7 1109,66.7 1110,66.7 1111,66.7 1112,66.7 1113,66.7 1114,66.7 1115,66.7 1116,66.7 1117,66.7 1118,66.7 1119,66.7 1120,66.7L1120,66.7 1119,66.7 1118,66.7 1117,66.7 1116,66.7 1115,66.7 1114,66.7 1113,66.7 1112,66.7 1111,66.7 1110,66.7 1109,66.7 1108,66.7 1107,66.7 1106,66.7 1105,66.7 1104,66.7 1103,66.7 1102,66.7 1101,66.7 1100,66.7 1099,66.7 1098,66.7 1097,66.7 1096,66.7 1095,66.7 1094,66.7 1093,66.7 1092,66.7 1091,66.7 1090,66.7 1089,66.7 1088,66.7 1087,66.7 1086,66.7 1085,66.7 1084,66.7 1083,66.7 1082,66.7 1081,67.6 1080,67.6 1079,67.5 1078,66.7 1077,66.7 1076,67.5 1075,67.9 1074,67.6 1073,66.7 1072,66.7 1071,66.7 1070,66.7 1069,66.7 1068,66.7 1067,66.7 1066,67.7 1065,67.7 1064,68 1063,67.9 1062,66.7 1061,68.1 1060,68.1 1059,68.2 1058,68.2 1057,68.2 1056,68 1055,67.8 1054,66.7 1053,67.9 1052,66.7 1051,68.2 1050,66.7 1049,68.4 1048,68.2 1047,68.2 1046,67.6 1045,66.7 1044,66.7 1043,66.7 1042,67.5 1041,66.7 1040,67.9 1039,68.2 1038,68.3 1037,68 1036,68.3 1035,68.2 1034,68 1033,68 1032,66.7 1031,68 1030,66.7 1029,68.2 1028,68 1027,68 1026,68.1 1025,68.1 1024,67.9 1023,68 1022,68.1 1021,68.3 1020,68.3 1019,68 1018,66.7 1017,67.9 1016,68.2 1015,67.9 1014,68 1013,68.2 1012,68.2 1011,68.1 1010,68.4 1009,68.3 1008,68.1 1007,67.9 1006,68 1005,66.7 1004,66.7 1003,66.7 1002,66.7 1001,67.5 1000,67.6 999,67.9 998,67.9 997,68.1 996,68.2 995,66.7 994,66.7 993,68 992,66.7 991,66.7 990,68.2 989,66.7 988,66.7 987,66.7 986,67.5 985,66.7 984,67.7 983,68 982,68.6 981,68.6 980,68.4 979,67.8 978,66.7 977,67.9 976,68.1 975,68.2 974,67.9 973,68.2 972,67.9 971,68 970,67.8 969,67.9 968,67.9 967,68.2 966,68.1 965,66.7 964,67.9 963,68 962,66.7 961,67.8 960,67.6 959,67.6 958,67.8 957,67.7 956,66.7 955,67.9 954,68 953,68.1 952,66.7 951,68 950,66.7 949,67.9 948,68.3 947,68.1 946,68.1 945,67.6 944,66.7 943,66.7 942,66.7 941,66.7 940,66.7 939,66.7 938,66.7 937,66.7 936,66.7 935,66.7 934,66.7 933,66.7 932,66.7 931,66.7 930,67.5 929,66.7 928,67.6 927,67.6 926,67.7 925,66.7 924,67.8 923,66.7 922,67.5 921,66.7 920,66.7 919,67.5 918,67.6 917,67.9 916,66.7 915,68.2 914,68 913,66.7 912,66.7 911,66.7 910,66.7 909,66.7 908,66.7 907,67.5 906,67.6 905,68.1 904,67.9 903,66.7 902,67.8 901,66.7 900,67.9 899,67.9 898,68 897,67.9 896,67.6 895,67.5 894,66.7 893,66.7 892,66.7 891,66.7 890,66.7 889,66.7 888,66.7 887,67.5 886,67.6 885,67.6 884,67.8 883,68.1 882,67.9 881,67.9 880,66.7 879,66.7 878,66.7 877,66.7 876,66.7 875,66.7 874,66.7 873,66.7 872,66.7 871,66.7 870,66.7 869,66.7 868,66.7 867,67.5 866,67.7 865,67.8 864,67.8 863,67.6 862,67.5 861,66.7 860,66.7 859,66.7 858,66.7 857,66.7 856,66.7 855,66.7 854,66.7 853,66.7 852,66.7 851,67.5 850,66.7 849,67.9 848,67.7 847,67.7 846,67.5 845,66.7 844,66.7 843,66.7 842,66.7 841,66.7 840,66.7 839,66.7 838,66.7 837,67.6 836,66.7Z" fill="#49c996"/><path d="M836,76.6 837,76.6 838,77.5 839,77.5 840,77.5 841,77.5 842,77.5 843,77.5 844,77.5 845,77.5 846,76.6 847,76.6 848,77.5 849,76.4 850,76.7 851,76.8 852,77.5 853,77.5 854,77.5 855,77.5 856,77.5 857,77.5 858,77.5 859,77.5 860,77.5 861,77.5 862,76.7 863,77.5 864,76.3 865,76.4 866,77.5 867,76.7 868,76.7 869,77.5 870,77.5 871,77.5 872,77.5 873,77.5 874,77.5 875,77.5 876,77.5 877,77.5 878,77.5 879,76.7 880,76.6 881,76.4 882,76.4 883,76.1 884,76.4 885,76.5 886,76.7 887,77.5 888,77.5 889,77.5 890,77.5 891,77.5 892,77.5 893,77.5 894,77.5 895,76.7 896,77.5 897,77.5 898,77.5 899,76.3 900,76.3 901,76.4 902,76.4 903,77.5 904,77.5 905,77.5 906,76.5 907,76.6 908,77.5 909,77.5 910,77.5 911,77.5 912,76.5 913,76.1 914,75.9 915,76.3 916,76 917,76.3 918,76.4 919,76.7 920,77.5 921,77.5 922,76.7 923,76.3 924,77.5 925,77.5 926,77.5 927,76.6 928,77.5 929,76.7 930,76.7 931,77.5 932,77.5 933,77.5 934,77.5 935,77.5 936,77.5 937,77.5 938,77.5 939,77.5 940,77.5 941,77.5 942,77.5 943,77.5 944,77.5 945,76.5 946,76 947,76.1 948,76.1 949,76 950,76.1 951,76.3 952,77.5 953,76.3 954,76.4 955,76.2 956,77.5 957,76.3 958,76.3 959,76.5 960,76.6 961,76.5 962,77.5 963,76.1 964,77.5 965,76.1 966,76 967,76 968,76.3 969,77.5 970,76.2 971,77.5 972,76 973,76 974,76.1 975,76.1 976,76 977,76.1 978,76.4 979,76.1 980,75.8 981,75.9 982,77.5 983,76.3 984,76.5 985,76.6 986,76.6 987,76.7 988,76.5 989,76.2 990,75.9 991,76.1 992,75.7 993,76.2 994,76.1 995,75.9 996,76.2 997,76.3 998,76.2 999,76.4 1000,77.5 1001,77.5 1002,77.5 1003,77.5 1004,77.5 1005,77.5 1006,76.1 1007,76.3 1008,75.8 1009,76 1010,75.9 1011,76.2 1012,77.5 1013,76 1014,76.2 1015,75.9 1016,76.2 1017,77.5 1018,76 1019,76.3 1020,76.3 1021,77.5 1022,76.1 1023,76.3 1024,76.2 1025,76.1 1026,77.5 1027,76.2 1028,77.5 1029,76.1 1030,76.2 1031,75.9 1032,76 1033,75.8 1034,77.5 1035,75.8 1036,75.8 1037,75.8 1038,76.2 1039,76.3 1040,76.5 1041,77.5 1042,76.7 1043,77.5 1044,77.5 1045,77.5 1046,76.5 1047,75.9 1048,77.5 1049,75.7 1050,76.2 1051,76 1052,76 1053,76.4 1054,76.3 1055,76.3 1056,76.2 1057,76 1058,77.5 1059,77.5 1060,77.5 1061,76.4 1062,76.3 1063,77.5 1064,76.3 1065,76.5 1066,77.5 1067,77.5 1068,77.5 1069,77.5 1070,77.5 1071,77.5 1072,76.7 1073,76.5 1074,77.5 1075,76.5 1076,76.7 1077,77.5 1078,77.5 1079,77.5 1080,76.7 1081,76.7 1082,77.5 1083,77.5 1084,77.5 1085,77.5 1086,77.5 1087,77.5 1088,77.5 1089,77.5 1090,77.5 1091,77.5 1092,77.5 1093,77.5 1094,77.5 1095,77.5 1096,77.5 1097,77.5 1098,77.5 1099,77.5 1100,77.5 1101,77.5 1102,77.5 1103,77.5 1104,77.5 1105,77.5 1106,77.5 1107,77.5 1108,77.5 1109,77.5 1110,77.5 1111,77.5 1112,77.5 1113,77.5 1114,77.5 1115,77.5 1116,77.5 1117,77.5 1118,77.5 1119,77.5 1120,77.5L1120,77.5 1119,77.5 1118,77.5 1117,77.5 1116,77.5 1115,77.5 1114,77.5 1113,77.5 1112,77.5 1111,77.5 1110,77.5 1109,77.5 1108,77.5 1107,77.5 1106,77.5 1105,77.5 1104,77.5 1103,77.5 1102,77.5 1101,77.5 1100,77.5 1099,77.5 1098,77.5 1097,77.5 1096,77.5 1095,77.5 1094,77.5 1093,77.5 1092,77.5 1091,77.5 1090,77.5 1089,77.5 1088,77.5 1087,77.5 1086,77.5 1085,77.5 1084,77.5 1083,77.5 1082,77.5 1081,78.3 1080,78.3 1079,77.5 1078,77.5 1077,77.5 1076,78.3 1075,78.5 1074,77.5 1073,78.5 1072,78.3 1071,77.5 1070,77.5 1069,77.5 1068,77.5 1067,77.5 1066,77.5 1065,78.5 1064,78.7 1063,77.5 1062,78.7 1061,78.6 1060,77.5 1059,77.5 1058,77.5 1057,79 1056,78.8 1055,78.7 1054,78.7 1053,78.6 1052,79 1051,79 1050,78.8 1049,79.3 1048,77.5 1047,79.1 1046,78.5 1045,77.5 1044,77.5 1043,77.5 1042,78.3 1041,77.5 1040,78.5 1039,78.7 1038,78.8 1037,79.2 1036,79.2 1035,79.2 1034,77.5 1033,79.2 1032,79 1031,79.1 1030,78.8 1029,78.9 1028,77.5 1027,78.8 1026,77.5 1025,78.9 1024,78.8 1023,78.7 1022,78.9 1021,77.5 1020,78.7 1019,78.7 1018,79 1017,77.5 1016,78.8 1015,79.1 1014,78.8 1013,79 1012,77.5 1011,78.8 1010,79.1 1009,79 1008,79.2 1007,78.7 1006,78.9 1005,77.5 1004,77.5 1003,77.5 1002,77.5 1001,77.5 1000,77.5 999,78.6 998,78.8 997,78.7 996,78.8 995,79.1 994,78.9 993,78.8 992,79.3 991,78.9 990,79.1 989,78.8 988,78.5 987,78.3 986,78.4 985,78.4 984,78.5 983,78.7 982,77.5 981,79.1 980,79.2 979,78.9 978,78.6 977,78.9 976,79 975,78.9 974,78.9 973,79 972,79 971,77.5 970,78.8 969,77.5 968,78.7 967,79 966,79 965,78.9 964,77.5 963,78.9 962,77.5 961,78.5 960,78.4 959,78.5 958,78.7 957,78.7 956,77.5 955,78.8 954,78.6 953,78.7 952,77.5 951,78.7 950,78.9 949,79 948,78.9 947,78.9 946,79 945,78.5 944,77.5 943,77.5 942,77.5 941,77.5 940,77.5 939,77.5 938,77.5 937,77.5 936,77.5 935,77.5 934,77.5 933,77.5 932,77.5 931,77.5 930,78.3 929,78.3 928,77.5 927,78.4 926,77.5 925,77.5 924,77.5 923,78.7 922,78.3 921,77.5 920,77.5 919,78.3 918,78.6 917,78.7 916,79 915,78.7 914,79.1 913,78.9 912,78.5 911,77.5 910,77.5 909,77.5 908,77.5 907,78.4 906,78.5 905,77.5 904,77.5 903,77.5 902,78.6 901,78.6 900,78.7 899,78.7 898,77.5 897,77.5 896,77.5 895,78.3 894,77.5 893,77.5 892,77.5 891,77.5 890,77.5 889,77.5 888,77.5 887,77.5 886,78.3 885,78.5 884,78.6 883,78.9 882,78.6 881,78.6 880,78.4 879,78.3 878,77.5 877,77.5 876,77.5 875,77.5 874,77.5 873,77.5 872,77.5 871,77.5 870,77.5 869,77.5 868,78.3 867,78.3 866,77.5 865,78.6 864,78.7 863,77.5 862,78.3 861,77.5 860,77.5 859,77.5 858,77.5 857,77.5 856,77.5 855,77.5 854,77.5 853,77.5 852,77.5 851,78.2 850,78.3 849,78.6 848,77.5 847,78.4 846,78.4 845,77.5 844,77.5 843,77.5 842,77.5 841,77.5 840,77.5 839,77.5 838,77.5 837,78.4 836,78.4Z" fill="#49c996"/>
<path d="M411.0 62.5V81.5" stroke="#c8403a" stroke-width="1"/>
<rect x="293" y="62.5" width="4.5" height="19.0" rx="2" fill="#484848" stroke="#8a8a8a" stroke-width="0.8"/>
<rect x="1081.5" y="62.5" width="4.5" height="19.0" rx="2" fill="#484848" stroke="#8a8a8a" stroke-width="0.8"/>
</svg>
<svg style="left:1128px;top:64px" width="15" height="15" viewBox="0 0 15 15"><circle cx="6.5" cy="7" r="3.2" fill="none" stroke="#c8c8c8" stroke-width="1.2"/><path d="M9 9.5l3.5 3.5" stroke="#c8c8c8" stroke-width="1.5"/><path d="M6.5 0.5v2.2M6.5 11.3v2.2M0 7h2.2M10.8 7h2.2" stroke="#c8c8c8" stroke-width="1.1"/><path d="M5 7h3" stroke="#c8c8c8" stroke-width="0.9"/></svg>
<svg style="left:1151px;top:66px" width="11" height="11" viewBox="0 0 11 11"><rect x="0.6" y="0.6" width="9.8" height="9.8" rx="1" fill="#8e8e8e" stroke="#c8c8c8" stroke-width="1.2"/><path d="M0.6 5.5h9.8" stroke="#2a2a2a" stroke-width="1.1"/></svg>
<svg style="left:293.3px;top:84.3px" width="6.4" height="9" viewBox="0 0 7 10"><path d="M0.5 0.5h6v5.6L3.5 9.4 0.5 6.1z" fill="#6e6e6e" stroke="#b4b4b4" stroke-width="0.9"/></svg>
<div class="t" style="top:83.5px;line-height:12px;font-size:9.2px;color:#b4b4b4;white-space:nowrap;left:301px;width:60.5px;overflow:hidden;">Timestamp: 158</div>
<svg style="left:364.3px;top:84.3px" width="6.4" height="9" viewBox="0 0 7 10"><path d="M0.5 0.5h6v5.6L3.5 9.4 0.5 6.1z" fill="#6e6e6e" stroke="#b4b4b4" stroke-width="0.9"/></svg>
<div class="t" style="top:83.5px;line-height:12px;font-size:9.2px;color:#b4b4b4;white-space:nowrap;left:372px;">Marker 1</div>
<svg style="left:894.3px;top:84.3px" width="6.4" height="9" viewBox="0 0 7 10"><path d="M0.5 0.5h6v5.6L3.5 9.4 0.5 6.1z" fill="#6e6e6e" stroke="#b4b4b4" stroke-width="0.9"/></svg>
<div class="t" style="top:83.5px;line-height:12px;font-size:9.2px;color:#b4b4b4;white-space:nowrap;left:902px;">Tempo: 124.9998</div>
<svg style="left:0;top:0" width="1280" height="798" viewBox="0 0 1280 798">
<rect x="295" y="95.8" width="825" height="17.6" fill="#2b2b2b"/>
<rect x="416.3" y="95.8" width="447.1" height="17.6" fill="#2b4a43"/>
<path d="M340.8 111.3V113" stroke="#8a8a8a" stroke-width="1"/>
<path d="M386.0 109.8V113" stroke="#a8a8a8" stroke-width="1"/>
<path d="M431.2 111.3V113" stroke="#8a8a8a" stroke-width="1"/>
<path d="M476.5 109.8V113" stroke="#a8a8a8" stroke-width="1"/>
<path d="M521.8 111.3V113" stroke="#8a8a8a" stroke-width="1"/>
<path d="M567.0 109.8V113" stroke="#a8a8a8" stroke-width="1"/>
<path d="M612.2 111.3V113" stroke="#8a8a8a" stroke-width="1"/>
<path d="M657.5 109.8V113" stroke="#a8a8a8" stroke-width="1"/>
<path d="M702.8 111.3V113" stroke="#8a8a8a" stroke-width="1"/>
<path d="M748.0 109.8V113" stroke="#a8a8a8" stroke-width="1"/>
<path d="M793.2 111.3V113" stroke="#8a8a8a" stroke-width="1"/>
<path d="M838.5 109.8V113" stroke="#a8a8a8" stroke-width="1"/>
<path d="M883.8 111.3V113" stroke="#8a8a8a" stroke-width="1"/>
<path d="M929.0 109.8V113" stroke="#a8a8a8" stroke-width="1"/>
<path d="M974.2 111.3V113" stroke="#8a8a8a" stroke-width="1"/>
<path d="M1019.5 109.8V113" stroke="#a8a8a8" stroke-width="1"/>
<path d="M1064.8 111.3V113" stroke="#8a8a8a" stroke-width="1"/>
<path d="M1110.0 109.8V113" stroke="#a8a8a8" stroke-width="1"/>
<path d="M295.8 96V113" stroke="#c8c8c8" stroke-width="1" stroke-dasharray="1 1.2" opacity="0.85"/>
<path d="M367.2 96V113" stroke="#c8c8c8" stroke-width="1" stroke-dasharray="1 1.2" opacity="0.85"/>
<path d="M897.3 96V113" stroke="#c8c8c8" stroke-width="1" stroke-dasharray="1 1.2" opacity="0.85"/>
<path d="M538.7 96V113" stroke="#2b5a7c" stroke-width="2.2"/>
<path d="M636.5 106.5v3M638.5 106.5v3M640.5 106.5v3" stroke="#8aa" stroke-width="0.9"/>
<path d="M416.3 96V106" stroke="#d0d0d0" stroke-width="1"/>
<path d="M412.7 104.2a1 1 0 0 1 1-1h5.2a1 1 0 0 1 1 1v3.6l-3.6 3.8-3.6-3.8z" fill="#3a8ee6"/>
<path d="M863.4 96V101l2.2 3-2.2 3V112" stroke="#d8d8d8" stroke-width="1.1" fill="none"/>
</svg>
<div class="t" style="top:96.5px;line-height:12px;font-size:8.7px;color:#b4b4b4;white-space:nowrap;left:297px;">hms</div>
<div class="t" style="top:96.5px;line-height:12px;font-size:8.7px;color:#c0c0c0;white-space:nowrap;left:286.0px;width:200px;text-align:center;">0:20</div>
<div class="t" style="top:96.5px;line-height:12px;font-size:8.7px;color:#c0c0c0;white-space:nowrap;left:376.5px;width:200px;text-align:center;">0:40</div>
<div class="t" style="top:96.5px;line-height:12px;font-size:8.7px;color:#c0c0c0;white-space:nowrap;left:467.0px;width:200px;text-align:center;">1:00</div>
<div class="t" style="top:96.5px;line-height:12px;font-size:8.7px;color:#c0c0c0;white-space:nowrap;left:557.5px;width:200px;text-align:center;">1:20</div>
<div class="t" style="top:96.5px;line-height:12px;font-size:8.7px;color:#c0c0c0;white-space:nowrap;left:648.0px;width:200px;text-align:center;">1:40</div>
<div class="t" style="top:96.5px;line-height:12px;font-size:8.7px;color:#c0c0c0;white-space:nowrap;left:738.5px;width:200px;text-align:center;">2:00</div>
<div class="t" style="top:96.5px;line-height:12px;font-size:8.7px;color:#c0c0c0;white-space:nowrap;left:829.0px;width:200px;text-align:center;">2:20</div>
<div class="t" style="top:96.5px;line-height:12px;font-size:8.7px;color:#c0c0c0;white-space:nowrap;left:919.5px;width:200px;text-align:center;">2:40</div>
<div class="t" style="top:96.5px;line-height:12px;font-size:8.7px;color:#c0c0c0;white-space:nowrap;right:161.5px;">3:00</div>
<div style="left:1124px;top:96px;width:17px;height:15px;background:#161616;"></div>
<svg style="left:1127.2px;top:97.8px" width="11" height="12.2" viewBox="0 0 10 11"><path d="M1.8 10V5a3.2 3.2 0 0 1 6.4 0v5" fill="none" stroke="#3a8ee6" stroke-width="2.4"/><path d="M0.6 8.6h2.4M7 8.6h2.4" stroke="#161616" stroke-width="0.8"/></svg>
<svg style="left:1145px;top:97.5px" width="6" height="11" viewBox="0 0 6 11"><path d="M0.5 0.5h5v3.5l-1.6 1.6v5h-1.8v-5L0.5 4z" fill="#c8c8c8"/></svg>
<svg style="left:303.5px;top:115.5px" width="9" height="9" viewBox="0 0 9 9"><rect x="0.4" y="0.4" width="8.2" height="8.2" fill="#2a2a2a" stroke="#8a8a8a" stroke-width="0.8"/><path d="M1.2 7.8L7.8 1.2v6.6z" fill="#c8c8c8"/></svg>
<div style="left:593px;top:190px;width:93px;height:18.5px;background:#4b4b4b;"></div>
<div style="left:671px;top:192.5px;width:1px;height:14px;background:#3c3c3c;"></div>
<div style="left:594.5px;top:192px;width:1px;height:15px;background:#5a5a5a;"></div>
<div style="left:596.5px;top:192px;width:1px;height:15px;background:#5a5a5a;"></div>
<svg style="left:600.5px;top:193.5px" width="13" height="11" viewBox="0 0 13 11"><path d="M0.3 10.5h2.6v-2.6zM3.5 10.5h2.6v-5.4l-2.6 2.3zM6.7 10.5h2.6v-8.2l-2.6 2.3zM9.9 10.5h2.6v-10.3l-2.6 1.6z" fill="#808080"/></svg>
<svg style="left:616px;top:192px" width="14" height="14" viewBox="0 0 14 14"><circle cx="7" cy="7" r="5.8" fill="none" stroke="#b0b0b0" stroke-width="1.1"/><path d="M7 7V2.2" stroke="#b0b0b0" stroke-width="1.1"/></svg>
<div class="t" style="left:634px;top:193.3px;line-height:12px;font-size:8.7px;white-space:nowrap;color:#a8a8a8"><span style="color:#3a9af0">+0</span> dB</div>
<svg style="left:674px;top:194.5px" width="9" height="10" viewBox="0 0 9 10"><path d="M5 0.8l3.2 3.2-1.2 0.3-1.4 1.4 0.2 2-1 1L1 4.9l1-1 2 0.2L5.4 2.7z" fill="#d0d0d0"/><path d="M2.8 6.6L0.6 9.4" stroke="#d0d0d0" stroke-width="1"/></svg>
<div style="left:1120px;top:113px;width:54.5px;height:544px;background:#272727;box-sizing:border-box;border-top:1px solid #191919;border-right:1px solid #191919;"></div>
<div style="left:1120px;top:384.5px;width:54px;height:1px;background:#161616;"></div>
<div style="left:1121px;top:153.0px;width:2.5px;height:1px;background:#8a8a8a;"></div>
<div class="t" style="top:147.5px;line-height:12px;font-size:8.5px;color:#b0b0b0;white-space:nowrap;left:1127px;">-3</div>
<div style="left:1121px;top:345.0px;width:2.5px;height:1px;background:#8a8a8a;"></div>
<div class="t" style="top:339.5px;line-height:12px;font-size:8.5px;color:#b0b0b0;white-space:nowrap;left:1127px;">-3</div>
<div style="left:1121px;top:181.2px;width:2.5px;height:1px;background:#8a8a8a;"></div>
<div class="t" style="top:175.7px;line-height:12px;font-size:8.5px;color:#b0b0b0;white-space:nowrap;left:1127px;">-6</div>
<div style="left:1121px;top:316.8px;width:2.5px;height:1px;background:#8a8a8a;"></div>
<div class="t" style="top:311.3px;line-height:12px;font-size:8.5px;color:#b0b0b0;white-space:nowrap;left:1127px;">-6</div>
<div style="left:1121px;top:200.8px;width:2.5px;height:1px;background:#8a8a8a;"></div>
<div class="t" style="top:195.3px;line-height:12px;font-size:8.5px;color:#b0b0b0;white-space:nowrap;left:1127px;">-9</div>
<div style="left:1121px;top:297.2px;width:2.5px;height:1px;background:#8a8a8a;"></div>
<div class="t" style="top:291.7px;line-height:12px;font-size:8.5px;color:#b0b0b0;white-space:nowrap;left:1127px;">-9</div>
<div style="left:1121px;top:225.5px;width:2.5px;height:1px;background:#8a8a8a;"></div>
<div class="t" style="top:220.0px;line-height:12px;font-size:8.5px;color:#b0b0b0;white-space:nowrap;left:1127px;">-15</div>
<div style="left:1121px;top:272.5px;width:2.5px;height:1px;background:#8a8a8a;"></div>
<div class="t" style="top:267.0px;line-height:12px;font-size:8.5px;color:#b0b0b0;white-space:nowrap;left:1127px;">-15</div>
<div style="left:1121px;top:236.5px;width:2.5px;height:1px;background:#8a8a8a;"></div>
<div class="t" style="top:231.0px;line-height:12px;font-size:8.5px;color:#b0b0b0;white-space:nowrap;left:1127px;">-21</div>
<div style="left:1121px;top:261.5px;width:2.5px;height:1px;background:#8a8a8a;"></div>
<div class="t" style="top:256.0px;line-height:12px;font-size:8.5px;color:#b0b0b0;white-space:nowrap;left:1127px;">-21</div>
<div style="left:1121px;top:249.0px;width:2.5px;height:1px;background:#8a8a8a;"></div>
<div class="t" style="top:243.5px;line-height:12px;font-size:7px;color:#b0b0b0;white-space:nowrap;left:1127px;">-&#8734;</div>
<div style="left:1120.5px;top:244.0px;width:1.5px;height:1px;background:#5a5a5a;"></div>
<div style="left:1120.5px;top:254.0px;width:1.5px;height:1px;background:#5a5a5a;"></div>
<div style="left:1120.5px;top:231.0px;width:1.5px;height:1px;background:#5a5a5a;"></div>
<div style="left:1120.5px;top:267.0px;width:1.5px;height:1px;background:#5a5a5a;"></div>
<div style="left:1120.5px;top:219.0px;width:1.5px;height:1px;background:#5a5a5a;"></div>
<div style="left:1120.5px;top:279.0px;width:1.5px;height:1px;background:#5a5a5a;"></div>
<div style="left:1120.5px;top:209.0px;width:1.5px;height:1px;background:#5a5a5a;"></div>
<div style="left:1120.5px;top:289.0px;width:1.5px;height:1px;background:#5a5a5a;"></div>
<div style="left:1120.5px;top:192.0px;width:1.5px;height:1px;background:#5a5a5a;"></div>
<div style="left:1120.5px;top:306.0px;width:1.5px;height:1px;background:#5a5a5a;"></div>
<div style="left:1120.5px;top:173.0px;width:1.5px;height:1px;background:#5a5a5a;"></div>
<div style="left:1120.5px;top:325.0px;width:1.5px;height:1px;background:#5a5a5a;"></div>
<div style="left:1120.5px;top:164.0px;width:1.5px;height:1px;background:#5a5a5a;"></div>
<div style="left:1120.5px;top:334.0px;width:1.5px;height:1px;background:#5a5a5a;"></div>
<div style="left:1120.5px;top:142.0px;width:1.5px;height:1px;background:#5a5a5a;"></div>
<div style="left:1120.5px;top:356.0px;width:1.5px;height:1px;background:#5a5a5a;"></div>
<div style="left:1120.5px;top:131.0px;width:1.5px;height:1px;background:#5a5a5a;"></div>
<div style="left:1120.5px;top:367.0px;width:1.5px;height:1px;background:#5a5a5a;"></div>
<div style="left:1120.5px;top:121.0px;width:1.5px;height:1px;background:#5a5a5a;"></div>
<div style="left:1120.5px;top:377.0px;width:1.5px;height:1px;background:#5a5a5a;"></div>
<div style="left:1121px;top:425.0px;width:2.5px;height:1px;background:#8a8a8a;"></div>
<div class="t" style="top:419.5px;line-height:12px;font-size:8.5px;color:#b0b0b0;white-space:nowrap;left:1127px;">-3</div>
<div style="left:1121px;top:617.0px;width:2.5px;height:1px;background:#8a8a8a;"></div>
<div class="t" style="top:611.5px;line-height:12px;font-size:8.5px;color:#b0b0b0;white-space:nowrap;left:1127px;">-3</div>
<div style="left:1121px;top:453.2px;width:2.5px;height:1px;background:#8a8a8a;"></div>
<div class="t" style="top:447.7px;line-height:12px;font-size:8.5px;color:#b0b0b0;white-space:nowrap;left:1127px;">-6</div>
<div style="left:1121px;top:588.8px;width:2.5px;height:1px;background:#8a8a8a;"></div>
<div class="t" style="top:583.3px;line-height:12px;font-size:8.5px;color:#b0b0b0;white-space:nowrap;left:1127px;">-6</div>
<div style="left:1121px;top:472.8px;width:2.5px;height:1px;background:#8a8a8a;"></div>
<div class="t" style="top:467.3px;line-height:12px;font-size:8.5px;color:#b0b0b0;white-space:nowrap;left:1127px;">-9</div>
<div style="left:1121px;top:569.2px;width:2.5px;height:1px;background:#8a8a8a;"></div>
<div class="t" style="top:563.7px;line-height:12px;font-size:8.5px;color:#b0b0b0;white-space:nowrap;left:1127px;">-9</div>
<div style="left:1121px;top:497.5px;width:2.5px;height:1px;background:#8a8a8a;"></div>
<div class="t" style="top:492.0px;line-height:12px;font-size:8.5px;color:#b0b0b0;white-space:nowrap;left:1127px;">-15</div>
<div style="left:1121px;top:544.5px;width:2.5px;height:1px;background:#8a8a8a;"></div>
<div class="t" style="top:539.0px;line-height:12px;font-size:8.5px;color:#b0b0b0;white-space:nowrap;left:1127px;">-15</div>
<div style="left:1121px;top:508.5px;width:2.5px;height:1px;background:#8a8a8a;"></div>
<div class="t" style="top:503.0px;line-height:12px;font-size:8.5px;color:#b0b0b0;white-space:nowrap;left:1127px;">-21</div>
<div style="left:1121px;top:533.5px;width:2.5px;height:1px;background:#8a8a8a;"></div>
<div class="t" style="top:528.0px;line-height:12px;font-size:8.5px;color:#b0b0b0;white-space:nowrap;left:1127px;">-21</div>
<div style="left:1121px;top:521.0px;width:2.5px;height:1px;background:#8a8a8a;"></div>
<div class="t" style="top:515.5px;line-height:12px;font-size:7px;color:#b0b0b0;white-space:nowrap;left:1127px;">-&#8734;</div>
<div style="left:1120.5px;top:516.0px;width:1.5px;height:1px;background:#5a5a5a;"></div>
<div style="left:1120.5px;top:526.0px;width:1.5px;height:1px;background:#5a5a5a;"></div>
<div style="left:1120.5px;top:503.0px;width:1.5px;height:1px;background:#5a5a5a;"></div>
<div style="left:1120.5px;top:539.0px;width:1.5px;height:1px;background:#5a5a5a;"></div>
<div style="left:1120.5px;top:491.0px;width:1.5px;height:1px;background:#5a5a5a;"></div>
<div style="left:1120.5px;top:551.0px;width:1.5px;height:1px;background:#5a5a5a;"></div>
<div style="left:1120.5px;top:481.0px;width:1.5px;height:1px;background:#5a5a5a;"></div>
<div style="left:1120.5px;top:561.0px;width:1.5px;height:1px;background:#5a5a5a;"></div>
<div style="left:1120.5px;top:464.0px;width:1.5px;height:1px;background:#5a5a5a;"></div>
<div style="left:1120.5px;top:578.0px;width:1.5px;height:1px;background:#5a5a5a;"></div>
<div style="left:1120.5px;top:445.0px;width:1.5px;height:1px;background:#5a5a5a;"></div>
<div style="left:1120.5px;top:597.0px;width:1.5px;height:1px;background:#5a5a5a;"></div>
<div style="left:1120.5px;top:436.0px;width:1.5px;height:1px;background:#5a5a5a;"></div>
<div style="left:1120.5px;top:606.0px;width:1.5px;height:1px;background:#5a5a5a;"></div>
<div style="left:1120.5px;top:414.0px;width:1.5px;height:1px;background:#5a5a5a;"></div>
<div style="left:1120.5px;top:628.0px;width:1.5px;height:1px;background:#5a5a5a;"></div>
<div style="left:1120.5px;top:403.0px;width:1.5px;height:1px;background:#5a5a5a;"></div>
<div style="left:1120.5px;top:639.0px;width:1.5px;height:1px;background:#5a5a5a;"></div>
<div style="left:1120.5px;top:393.0px;width:1.5px;height:1px;background:#5a5a5a;"></div>
<div style="left:1120.5px;top:649.0px;width:1.5px;height:1px;background:#5a5a5a;"></div>
<div class="t" style="top:114.5px;line-height:12px;font-size:8.5px;color:#b0b0b0;white-space:nowrap;left:1125px;">dB</div>
<div class="t" style="top:386.5px;line-height:12px;font-size:8.5px;color:#b0b0b0;white-space:nowrap;left:1125px;">dB</div>
<div style="left:1157px;top:244.5px;width:14px;height:11px;background:#161d28;"></div>
<div class="t" style="top:244.3px;line-height:12px;font-size:6.5px;color:#3a8ee6;white-space:nowrap;left:1064px;width:200px;text-align:center;">1</div>
<div style="left:1157px;top:516.5px;width:14px;height:11px;background:#161d28;"></div>
<div class="t" style="top:516.3px;line-height:12px;font-size:6.5px;color:#3a8ee6;white-space:nowrap;left:1064px;width:200px;text-align:center;">2</div>
<div style="left:295px;top:657px;width:854px;height:7px;background:#323232;"></div>
<div style="left:726px;top:660px;width:17px;height:1.5px;background:#454545;"></div>
<svg style="left:1156.5px;top:658.5px" width="6" height="4" viewBox="0 0 6 4"><path d="M0.3 3.7h5.4L3 0.4z" fill="#8c8c8c"/></svg>
<div style="left:1149px;top:657px;width:25px;height:7px;background:#262626;"></div>
<div class="t" style="top:674.0px;line-height:12px;font-size:12.3px;color:#4890dc;white-space:nowrap;left:297.5px;letter-spacing:-0.2px;">0:26.707</div>
<svg style="left:564.5px;top:674.5px" width="7" height="7"><rect width="7" height="7" fill="#505050"/></svg>
<svg style="left:586.5px;top:674px" width="8" height="8" viewBox="0 0 8 8"><path d="M0.5 0.3l7 3.7-7 3.7z" fill="#d6d6d6"/></svg>
<svg style="left:610px;top:674.5px" width="6" height="7" viewBox="0 0 6 7"><path d="M0.3 0h1.8v7H0.3zM3.9 0h1.8v7H3.9z" fill="#505050"/></svg>
<svg style="left:630.5px;top:674.5px" width="9" height="7" viewBox="0 0 9 7"><path d="M0.2 0h1.7v7H0.2z" fill="#d6d6d6"/><path d="M8.6 0v7L2.6 3.5z" fill="#d6d6d6"/></svg>
<svg style="left:652px;top:675px" width="12" height="6" viewBox="0 0 12 6"><path d="M5.8 0v6L0.2 3zM11.8 0v6L6.2 3z" fill="#d6d6d6"/></svg>
<svg style="left:673px;top:675px" width="12" height="6" viewBox="0 0 12 6"><path d="M0.2 0v6l5.6-3zM6.2 0v6l5.6-3z" fill="#d6d6d6"/></svg>
<svg style="left:697.5px;top:674.5px" width="9" height="7" viewBox="0 0 9 7"><path d="M7.1 0h1.7v7H7.1z" fill="#d6d6d6"/><path d="M0.4 0v7l6-3.5z" fill="#d6d6d6"/></svg>
<div style="left:720.2px;top:674.2px;width:7.6px;height:7.6px;border-radius:50%;background:#e8433f"></div>
<svg style="left:741px;top:673px" width="11" height="10" viewBox="0 0 11 10"><path d="M1 4v5h9V4" fill="none" stroke="#d6d6d6" stroke-width="1.5"/><path d="M3.2 5.2V3.4h3.6" fill="none" stroke="#d6d6d6" stroke-width="1.3"/><path d="M6.4 0.6l3 2.8-3 2.8z" fill="#d6d6d6"/></svg>
<svg style="left:762px;top:673.7px" width="13" height="8" viewBox="0 0 13 8"><path d="M4.4 1.4L1.6 4l2.8 2.6" stroke="#d6d6d6" stroke-width="1.4" fill="none"/><path d="M6.3 0v8" stroke="#d6d6d6" stroke-width="1" stroke-dasharray="1.4 0.9"/><path d="M7.6 4h3" stroke="#d6d6d6" stroke-width="1.4"/><path d="M9.6 1.2L12.8 4 9.6 6.8z" fill="#d6d6d6"/></svg>
<svg style="left:953.5px;top:672px" width="16" height="14" viewBox="0 0 16 14"><path d="M3 1.5v11M1.8 1.5h2.4M1.8 12.5h2.4" stroke="#cfcfcf" stroke-width="1"/><circle cx="8.5" cy="6.5" r="3.1" fill="none" stroke="#cfcfcf" stroke-width="1.2"/><path d="M10.7 8.7l3.2 3.2" stroke="#cfcfcf" stroke-width="1.5"/><path d="M7.1 6.5h2.8M8.5 5.1v2.8" stroke="#cfcfcf" stroke-width="0.8"/></svg>
<svg style="left:975.5px;top:672px" width="16" height="14" viewBox="0 0 16 14"><path d="M3 1.5v11M1.8 1.5h2.4M1.8 12.5h2.4" stroke="#cfcfcf" stroke-width="1"/><circle cx="8.5" cy="6.5" r="3.1" fill="none" stroke="#cfcfcf" stroke-width="1.2"/><path d="M10.7 8.7l3.2 3.2" stroke="#cfcfcf" stroke-width="1.5"/><path d="M7.1 6.5h2.8" stroke="#cfcfcf" stroke-width="0.8"/></svg>
<svg style="left:997px;top:672px" width="16" height="14" viewBox="0 0 16 14"><path d="M2 1.5h12M2 0.3v2.4M14 0.3v2.4" stroke="#cfcfcf" stroke-width="1"/><circle cx="7.5" cy="7.5" r="3.1" fill="none" stroke="#cfcfcf" stroke-width="1.2"/><path d="M9.7 9.7l3.2 3.2" stroke="#cfcfcf" stroke-width="1.5"/><path d="M6.1 7.5h2.8M7.5 6.1v2.8" stroke="#cfcfcf" stroke-width="0.8"/></svg>
<svg style="left:1019.5px;top:672px" width="16" height="14" viewBox="0 0 16 14"><path d="M2 1.5h12M2 0.3v2.4M14 0.3v2.4" stroke="#cfcfcf" stroke-width="1"/><circle cx="7.5" cy="7.5" r="3.1" fill="none" stroke="#cfcfcf" stroke-width="1.2"/><path d="M9.7 9.7l3.2 3.2" stroke="#cfcfcf" stroke-width="1.5"/><path d="M6.1 7.5h2.8" stroke="#cfcfcf" stroke-width="0.8"/></svg>
<svg style="left:1042.3px;top:672px" width="16" height="14" viewBox="0 0 16 14"><path d="M7 0v2.4M7 11.2v2.4M0.5 6.8h2.4M11.2 6.8h2.4" stroke="#cfcfcf" stroke-width="1.2"/><circle cx="7" cy="6.8" r="3.1" fill="none" stroke="#cfcfcf" stroke-width="1.2"/><path d="M9.2 9.0l3.2 3.2" stroke="#cfcfcf" stroke-width="1.5"/><path d="M5.6 6.8h2.8" stroke="#cfcfcf" stroke-width="0.8"/></svg>
<svg style="left:1064px;top:672px" width="16" height="14" viewBox="0 0 16 14"><path d="M4 2.5c-1.4 0-1 1.8-1 2.6s-0.6 1.2-1.2 1.4c0.6 0.2 1.2 0.6 1.2 1.4s-0.4 2.6 1 2.6" fill="none" stroke="#cfcfcf" stroke-width="1"/><circle cx="9.5" cy="6.3" r="3.1" fill="none" stroke="#cfcfcf" stroke-width="1.2"/><path d="M11.7 8.5l3.2 3.2" stroke="#cfcfcf" stroke-width="1.5"/></svg>
<svg style="left:1089.5px;top:672px" width="16" height="14" viewBox="0 0 16 14"><path d="M1.5 2.5c1.4 0 1 1.8 1 2.6s0.6 1.2 1.2 1.4c-0.6 0.2-1.2 0.6-1.2 1.4s0.4 2.6-1 2.6" fill="none" stroke="#cfcfcf" stroke-width="1"/><circle cx="8.5" cy="6.3" r="3.1" fill="none" stroke="#cfcfcf" stroke-width="1.2"/><path d="M10.7 8.5l3.2 3.2" stroke="#cfcfcf" stroke-width="1.5"/></svg>
<svg style="left:1108px;top:672px" width="16" height="14" viewBox="0 0 16 14"><path d="M2.6 2.5c-1.2 0-0.9 1.8-0.9 2.6s-0.5 1.2-1 1.4c0.5 0.2 1 0.6 1 1.4s-0.3 2.6 0.9 2.6M4.4 2.5c1.2 0 0.9 1.8 0.9 2.6s0.5 1.2 1 1.4c-0.5 0.2-1 0.6-1 1.4s0.3 2.6-0.9 2.6" fill="none" stroke="#cfcfcf" stroke-width="0.9"/><circle cx="10.5" cy="6.3" r="3.1" fill="none" stroke="#cfcfcf" stroke-width="1.2"/><path d="M12.7 8.5l3.2 3.2" stroke="#cfcfcf" stroke-width="1.5"/></svg>
<svg style="left:1131.5px;top:672px" width="16" height="14" viewBox="0 0 16 14"><path d="M4.2 3.2A4.4 4.4 0 1 0 8 2.6" fill="none" stroke="#cfcfcf" stroke-width="1.3"/><path d="M3 0.5l2.6 2.6-3 1.4z" fill="#cfcfcf"/><path d="M8 4.5v3.2" stroke="#cfcfcf" stroke-width="1"/></svg>
<svg style="left:1153.8px;top:672px" width="16" height="14" viewBox="0 0 16 14"><path d="M3 1.5v11" stroke="#444444" stroke-width="1" stroke-dasharray="1.5 1"/><circle cx="8.5" cy="6.5" r="3.1" fill="none" stroke="#444444" stroke-width="1.2"/><path d="M10.7 8.7l3.2 3.2" stroke="#444444" stroke-width="1.5"/><path d="M7.1 6.5h2.8M8.5 5.1v2.8" stroke="#444444" stroke-width="0.8"/></svg>
<div class="t" style="top:39.0px;line-height:12px;font-size:8.7px;color:#e4e4e4;white-space:nowrap;left:1192px;">Essential Sound</div>
<svg style="left:1256.5px;top:41.8px" width="7" height="7" viewBox="0 0 7 7"><path d="M0 0.8h7M0 3.5h7M0 6.2h7" stroke="#c0c0c0" stroke-width="0.9"/></svg>
<div class="t" style="top:63.0px;line-height:12px;font-size:8.7px;color:#b0b0b0;white-space:nowrap;left:1191px;font-style:italic;">No Selection</div>
<div style="left:1182px;top:57px;width:98px;height:1px;background:#1e1e1e;"></div>
<div style="left:1182px;top:79.5px;width:98px;height:1px;background:#1c1c1c;"></div>
<div class="t" style="top:85.5px;line-height:12px;font-size:8.7px;color:#4a4a4a;white-space:nowrap;left:1191px;">Preset:</div>
<div style="left:1220px;top:84px;width:60px;height:14px;background:#282828;"></div>
<div style="left:1182px;top:101.5px;width:98px;height:1px;background:#1c1c1c;"></div>
<div style="left:1184px;top:683px;width:96px;height:9px;background:#212121;"></div>
<div style="left:1186px;top:684.5px;width:39px;height:6px;background:#2f2f2f;border-radius:3px;"></div>
<div class="t" style="top:700.0px;line-height:12px;font-size:8.7px;color:#d4d4d4;white-space:nowrap;left:298px;">Levels</div>
<svg style="left:328.5px;top:702.5px" width="7" height="7" viewBox="0 0 7 7"><path d="M0 0.8h7M0 3.5h7M0 6.2h7" stroke="#b0b0b0" stroke-width="0.9"/></svg>
<div style="left:293.5px;top:718.8px;width:736px;height:49.8px;background:#1d1d1d;box-sizing:border-box;border:1px solid #171717;"></div>
<div style="left:1022px;top:720px;width:1px;height:48px;background:#161616;"></div>
<div style="left:1023px;top:743.5px;width:6px;height:1px;background:#161616;"></div>
<div style="left:294.3px;top:722px;width:1.7px;height:46px;background:#9c9a3a;"></div>
<div style="left:294.3px;top:744px;width:1.7px;height:1px;background:#6c6a2a;"></div>
<svg style="left:0;top:0" width="1280" height="798" viewBox="0 0 1280 798">
<path d="M295.0 769.5v1.2" stroke="#6a6a6a" stroke-width="1"/>
<path d="M307.1 769.5v1.2" stroke="#6a6a6a" stroke-width="1"/>
<path d="M319.2 769.5v1.2" stroke="#6a6a6a" stroke-width="1"/>
<path d="M331.3 769.5v2.2" stroke="#9a9a9a" stroke-width="1"/>
<path d="M343.4 769.5v1.2" stroke="#6a6a6a" stroke-width="1"/>
<path d="M355.5 769.5v1.2" stroke="#6a6a6a" stroke-width="1"/>
<path d="M367.6 769.5v2.2" stroke="#9a9a9a" stroke-width="1"/>
<path d="M379.7 769.5v1.2" stroke="#6a6a6a" stroke-width="1"/>
<path d="M391.8 769.5v1.2" stroke="#6a6a6a" stroke-width="1"/>
<path d="M403.9 769.5v2.2" stroke="#9a9a9a" stroke-width="1"/>
<path d="M416.0 769.5v1.2" stroke="#6a6a6a" stroke-width="1"/>
<path d="M428.1 769.5v1.2" stroke="#6a6a6a" stroke-width="1"/>
<path d="M440.2 769.5v2.2" stroke="#9a9a9a" stroke-width="1"/>
<path d="M452.3 769.5v1.2" stroke="#6a6a6a" stroke-width="1"/>
<path d="M464.4 769.5v1.2" stroke="#6a6a6a" stroke-width="1"/>
<path d="M476.6 769.5v2.2" stroke="#9a9a9a" stroke-width="1"/>
<path d="M488.7 769.5v1.2" stroke="#6a6a6a" stroke-width="1"/>
<path d="M500.8 769.5v1.2" stroke="#6a6a6a" stroke-width="1"/>
<path d="M512.9 769.5v2.2" stroke="#9a9a9a" stroke-width="1"/>
<path d="M525.0 769.5v1.2" stroke="#6a6a6a" stroke-width="1"/>
<path d="M537.1 769.5v1.2" stroke="#6a6a6a" stroke-width="1"/>
<path d="M549.2 769.5v2.2" stroke="#9a9a9a" stroke-width="1"/>
<path d="M561.3 769.5v1.2" stroke="#6a6a6a" stroke-width="1"/>
<path d="M573.4 769.5v1.2" stroke="#6a6a6a" stroke-width="1"/>
<path d="M585.5 769.5v2.2" stroke="#9a9a9a" stroke-width="1"/>
<path d="M597.6 769.5v1.2" stroke="#6a6a6a" stroke-width="1"/>
<path d="M609.7 769.5v1.2" stroke="#6a6a6a" stroke-width="1"/>
<path d="M621.8 769.5v2.2" stroke="#9a9a9a" stroke-width="1"/>
<path d="M633.9 769.5v1.2" stroke="#6a6a6a" stroke-width="1"/>
<path d="M646.0 769.5v1.2" stroke="#6a6a6a" stroke-width="1"/>
<path d="M658.1 769.5v2.2" stroke="#9a9a9a" stroke-width="1"/>
<path d="M670.2 769.5v1.2" stroke="#6a6a6a" stroke-width="1"/>
<path d="M682.3 769.5v1.2" stroke="#6a6a6a" stroke-width="1"/>
<path d="M694.4 769.5v2.2" stroke="#9a9a9a" stroke-width="1"/>
<path d="M706.5 769.5v1.2" stroke="#6a6a6a" stroke-width="1"/>
<path d="M718.6 769.5v1.2" stroke="#6a6a6a" stroke-width="1"/>
<path d="M730.7 769.5v2.2" stroke="#9a9a9a" stroke-width="1"/>
<path d="M742.8 769.5v1.2" stroke="#6a6a6a" stroke-width="1"/>
<path d="M754.9 769.5v1.2" stroke="#6a6a6a" stroke-width="1"/>
<path d="M767.0 769.5v2.2" stroke="#9a9a9a" stroke-width="1"/>
<path d="M779.1 769.5v1.2" stroke="#6a6a6a" stroke-width="1"/>
<path d="M791.2 769.5v1.2" stroke="#6a6a6a" stroke-width="1"/>
<path d="M803.3 769.5v2.2" stroke="#9a9a9a" stroke-width="1"/>
<path d="M815.4 769.5v1.2" stroke="#6a6a6a" stroke-width="1"/>
<path d="M827.5 769.5v1.2" stroke="#6a6a6a" stroke-width="1"/>
<path d="M839.7 769.5v2.2" stroke="#9a9a9a" stroke-width="1"/>
<path d="M851.8 769.5v1.2" stroke="#6a6a6a" stroke-width="1"/>
<path d="M863.9 769.5v1.2" stroke="#6a6a6a" stroke-width="1"/>
<path d="M876.0 769.5v2.2" stroke="#9a9a9a" stroke-width="1"/>
<path d="M888.1 769.5v1.2" stroke="#6a6a6a" stroke-width="1"/>
<path d="M900.2 769.5v1.2" stroke="#6a6a6a" stroke-width="1"/>
<path d="M912.3 769.5v2.2" stroke="#9a9a9a" stroke-width="1"/>
<path d="M924.4 769.5v1.2" stroke="#6a6a6a" stroke-width="1"/>
<path d="M936.5 769.5v1.2" stroke="#6a6a6a" stroke-width="1"/>
<path d="M948.6 769.5v2.2" stroke="#9a9a9a" stroke-width="1"/>
<path d="M960.7 769.5v1.2" stroke="#6a6a6a" stroke-width="1"/>
<path d="M972.8 769.5v1.2" stroke="#6a6a6a" stroke-width="1"/>
<path d="M984.9 769.5v2.2" stroke="#9a9a9a" stroke-width="1"/>
<path d="M997.0 769.5v1.2" stroke="#6a6a6a" stroke-width="1"/>
<path d="M1009.1 769.5v1.2" stroke="#6a6a6a" stroke-width="1"/>
<path d="M1021.2 769.5v2.2" stroke="#9a9a9a" stroke-width="1"/>
</svg>
<div class="t" style="top:771.5px;line-height:12px;font-size:7px;color:#a8a8a8;white-space:nowrap;left:197.5px;width:200px;text-align:center;">dB</div>
<div class="t" style="top:771.5px;line-height:12px;font-size:7px;color:#a8a8a8;white-space:nowrap;left:231.31px;width:200px;text-align:center;">-57</div>
<div class="t" style="top:771.5px;line-height:12px;font-size:7px;color:#a8a8a8;white-space:nowrap;left:267.62px;width:200px;text-align:center;">-54</div>
<div class="t" style="top:771.5px;line-height:12px;font-size:7px;color:#a8a8a8;white-space:nowrap;left:303.93px;width:200px;text-align:center;">-51</div>
<div class="t" style="top:771.5px;line-height:12px;font-size:7px;color:#a8a8a8;white-space:nowrap;left:340.24px;width:200px;text-align:center;">-48</div>
<div class="t" style="top:771.5px;line-height:12px;font-size:7px;color:#a8a8a8;white-space:nowrap;left:376.55px;width:200px;text-align:center;">-45</div>
<div class="t" style="top:771.5px;line-height:12px;font-size:7px;color:#a8a8a8;white-space:nowrap;left:412.86px;width:200px;text-align:center;">-42</div>
<div class="t" style="top:771.5px;line-height:12px;font-size:7px;color:#a8a8a8;white-space:nowrap;left:449.1700000000001px;width:200px;text-align:center;">-39</div>
<div class="t" style="top:771.5px;line-height:12px;font-size:7px;color:#a8a8a8;white-space:nowrap;left:485.48px;width:200px;text-align:center;">-36</div>
<div class="t" style="top:771.5px;line-height:12px;font-size:7px;color:#a8a8a8;white-space:nowrap;left:521.79px;width:200px;text-align:center;">-33</div>
<div class="t" style="top:771.5px;line-height:12px;font-size:7px;color:#a8a8a8;white-space:nowrap;left:558.1px;width:200px;text-align:center;">-30</div>
<div class="t" style="top:771.5px;line-height:12px;font-size:7px;color:#a8a8a8;white-space:nowrap;left:594.4100000000001px;width:200px;text-align:center;">-27</div>
<div class="t" style="top:771.5px;line-height:12px;font-size:7px;color:#a8a8a8;white-space:nowrap;left:630.72px;width:200px;text-align:center;">-24</div>
<div class="t" style="top:771.5px;line-height:12px;font-size:7px;color:#a8a8a8;white-space:nowrap;left:667.03px;width:200px;text-align:center;">-21</div>
<div class="t" style="top:771.5px;line-height:12px;font-size:7px;color:#a8a8a8;white-space:nowrap;left:703.34px;width:200px;text-align:center;">-18</div>
<div class="t" style="top:771.5px;line-height:12px;font-size:7px;color:#a8a8a8;white-space:nowrap;left:739.6500000000001px;width:200px;text-align:center;">-15</div>
<div class="t" style="top:771.5px;line-height:12px;font-size:7px;color:#a8a8a8;white-space:nowrap;left:775.9600000000002px;width:200px;text-align:center;">-12</div>
<div class="t" style="top:771.5px;line-height:12px;font-size:7px;color:#a8a8a8;white-space:nowrap;left:812.2700000000001px;width:200px;text-align:center;">-9</div>
<div class="t" style="top:771.5px;line-height:12px;font-size:7px;color:#a8a8a8;white-space:nowrap;left:848.58px;width:200px;text-align:center;">-6</div>
<div class="t" style="top:771.5px;line-height:12px;font-size:7px;color:#a8a8a8;white-space:nowrap;left:884.89px;width:200px;text-align:center;">-3</div>
<div class="t" style="top:771.5px;line-height:12px;font-size:7px;color:#a8a8a8;white-space:nowrap;left:921.2px;width:200px;text-align:center;">0</div>
<div class="t" style="top:700.0px;line-height:12px;font-size:8.7px;color:#d4d4d4;white-space:nowrap;left:1045px;">Selection/View</div>
<svg style="left:1107.5px;top:702.5px" width="7" height="7" viewBox="0 0 7 7"><path d="M0 0.8h7M0 3.5h7M0 6.2h7" stroke="#b0b0b0" stroke-width="0.9"/></svg>
<div class="t" style="top:718.5px;line-height:12px;font-size:8.7px;color:#a8a8a8;white-space:nowrap;left:1082px;">Start</div>
<div class="t" style="top:718.5px;line-height:12px;font-size:8.7px;color:#a8a8a8;white-space:nowrap;left:1136px;">End</div>
<div class="t" style="top:718.5px;line-height:12px;font-size:8.7px;color:#a8a8a8;white-space:nowrap;left:1189px;">Duration</div>
<div class="t" style="top:732.5px;line-height:12px;font-size:8.7px;color:#a8a8a8;white-space:nowrap;left:1045px;">Selection</div>
<div class="t" style="top:748.0px;line-height:12px;font-size:8.7px;color:#a8a8a8;white-space:nowrap;left:1045px;">View</div>
<div class="t" style="top:732.5px;line-height:12px;font-size:8.7px;color:#3a8ee6;white-space:nowrap;left:1084px;">0:26.707</div>
<div class="t" style="top:748.0px;line-height:12px;font-size:8.7px;color:#3a8ee6;white-space:nowrap;left:1084px;">0:00.000</div>
<div class="t" style="top:732.5px;line-height:12px;font-size:8.7px;color:#3a8ee6;white-space:nowrap;left:1137px;">2:05.510</div>
<div class="t" style="top:748.0px;line-height:12px;font-size:8.7px;color:#3a8ee6;white-space:nowrap;left:1137px;">3:01.876</div>
<div class="t" style="top:732.5px;line-height:12px;font-size:8.7px;color:#3a8ee6;white-space:nowrap;left:1190px;">1:38.802</div>
<div class="t" style="top:748.0px;line-height:12px;font-size:8.7px;color:#3a8ee6;white-space:nowrap;left:1190px;">3:01.876</div>
<div style="left:878.5px;top:786px;width:1px;height:12px;background:#171717;"></div>
<div style="left:915.5px;top:786px;width:1px;height:12px;background:#171717;"></div>
<div style="left:953.5px;top:786px;width:1px;height:12px;background:#171717;"></div>
<div style="left:1076.5px;top:786px;width:1px;height:12px;background:#171717;"></div>
<div style="left:1127.5px;top:786px;width:1px;height:12px;background:#171717;"></div>
<div style="left:1173.5px;top:786px;width:1px;height:12px;background:#171717;"></div>
<div style="left:1239px;top:786px;width:1px;height:12px;background:#171717;"></div>
<div class="t" style="top:786.5px;line-height:12px;font-size:8.7px;color:#b4b4b4;white-space:nowrap;left:958.5px;">44100 Hz &#9679; 24-bit &#9679; 2 Channel</div>
<div class="t" style="top:786.5px;line-height:12px;font-size:8.7px;color:#b4b4b4;white-space:nowrap;left:1086px;">48.09 MB</div>
<div class="t" style="top:786.5px;line-height:12px;font-size:8.7px;color:#b4b4b4;white-space:nowrap;left:1137.5px;">3:10.560</div>
<div class="t" style="top:786.5px;line-height:12px;font-size:8.7px;color:#b4b4b4;white-space:nowrap;left:1180px;">235.93 GB free</div>
</div></body></html>
